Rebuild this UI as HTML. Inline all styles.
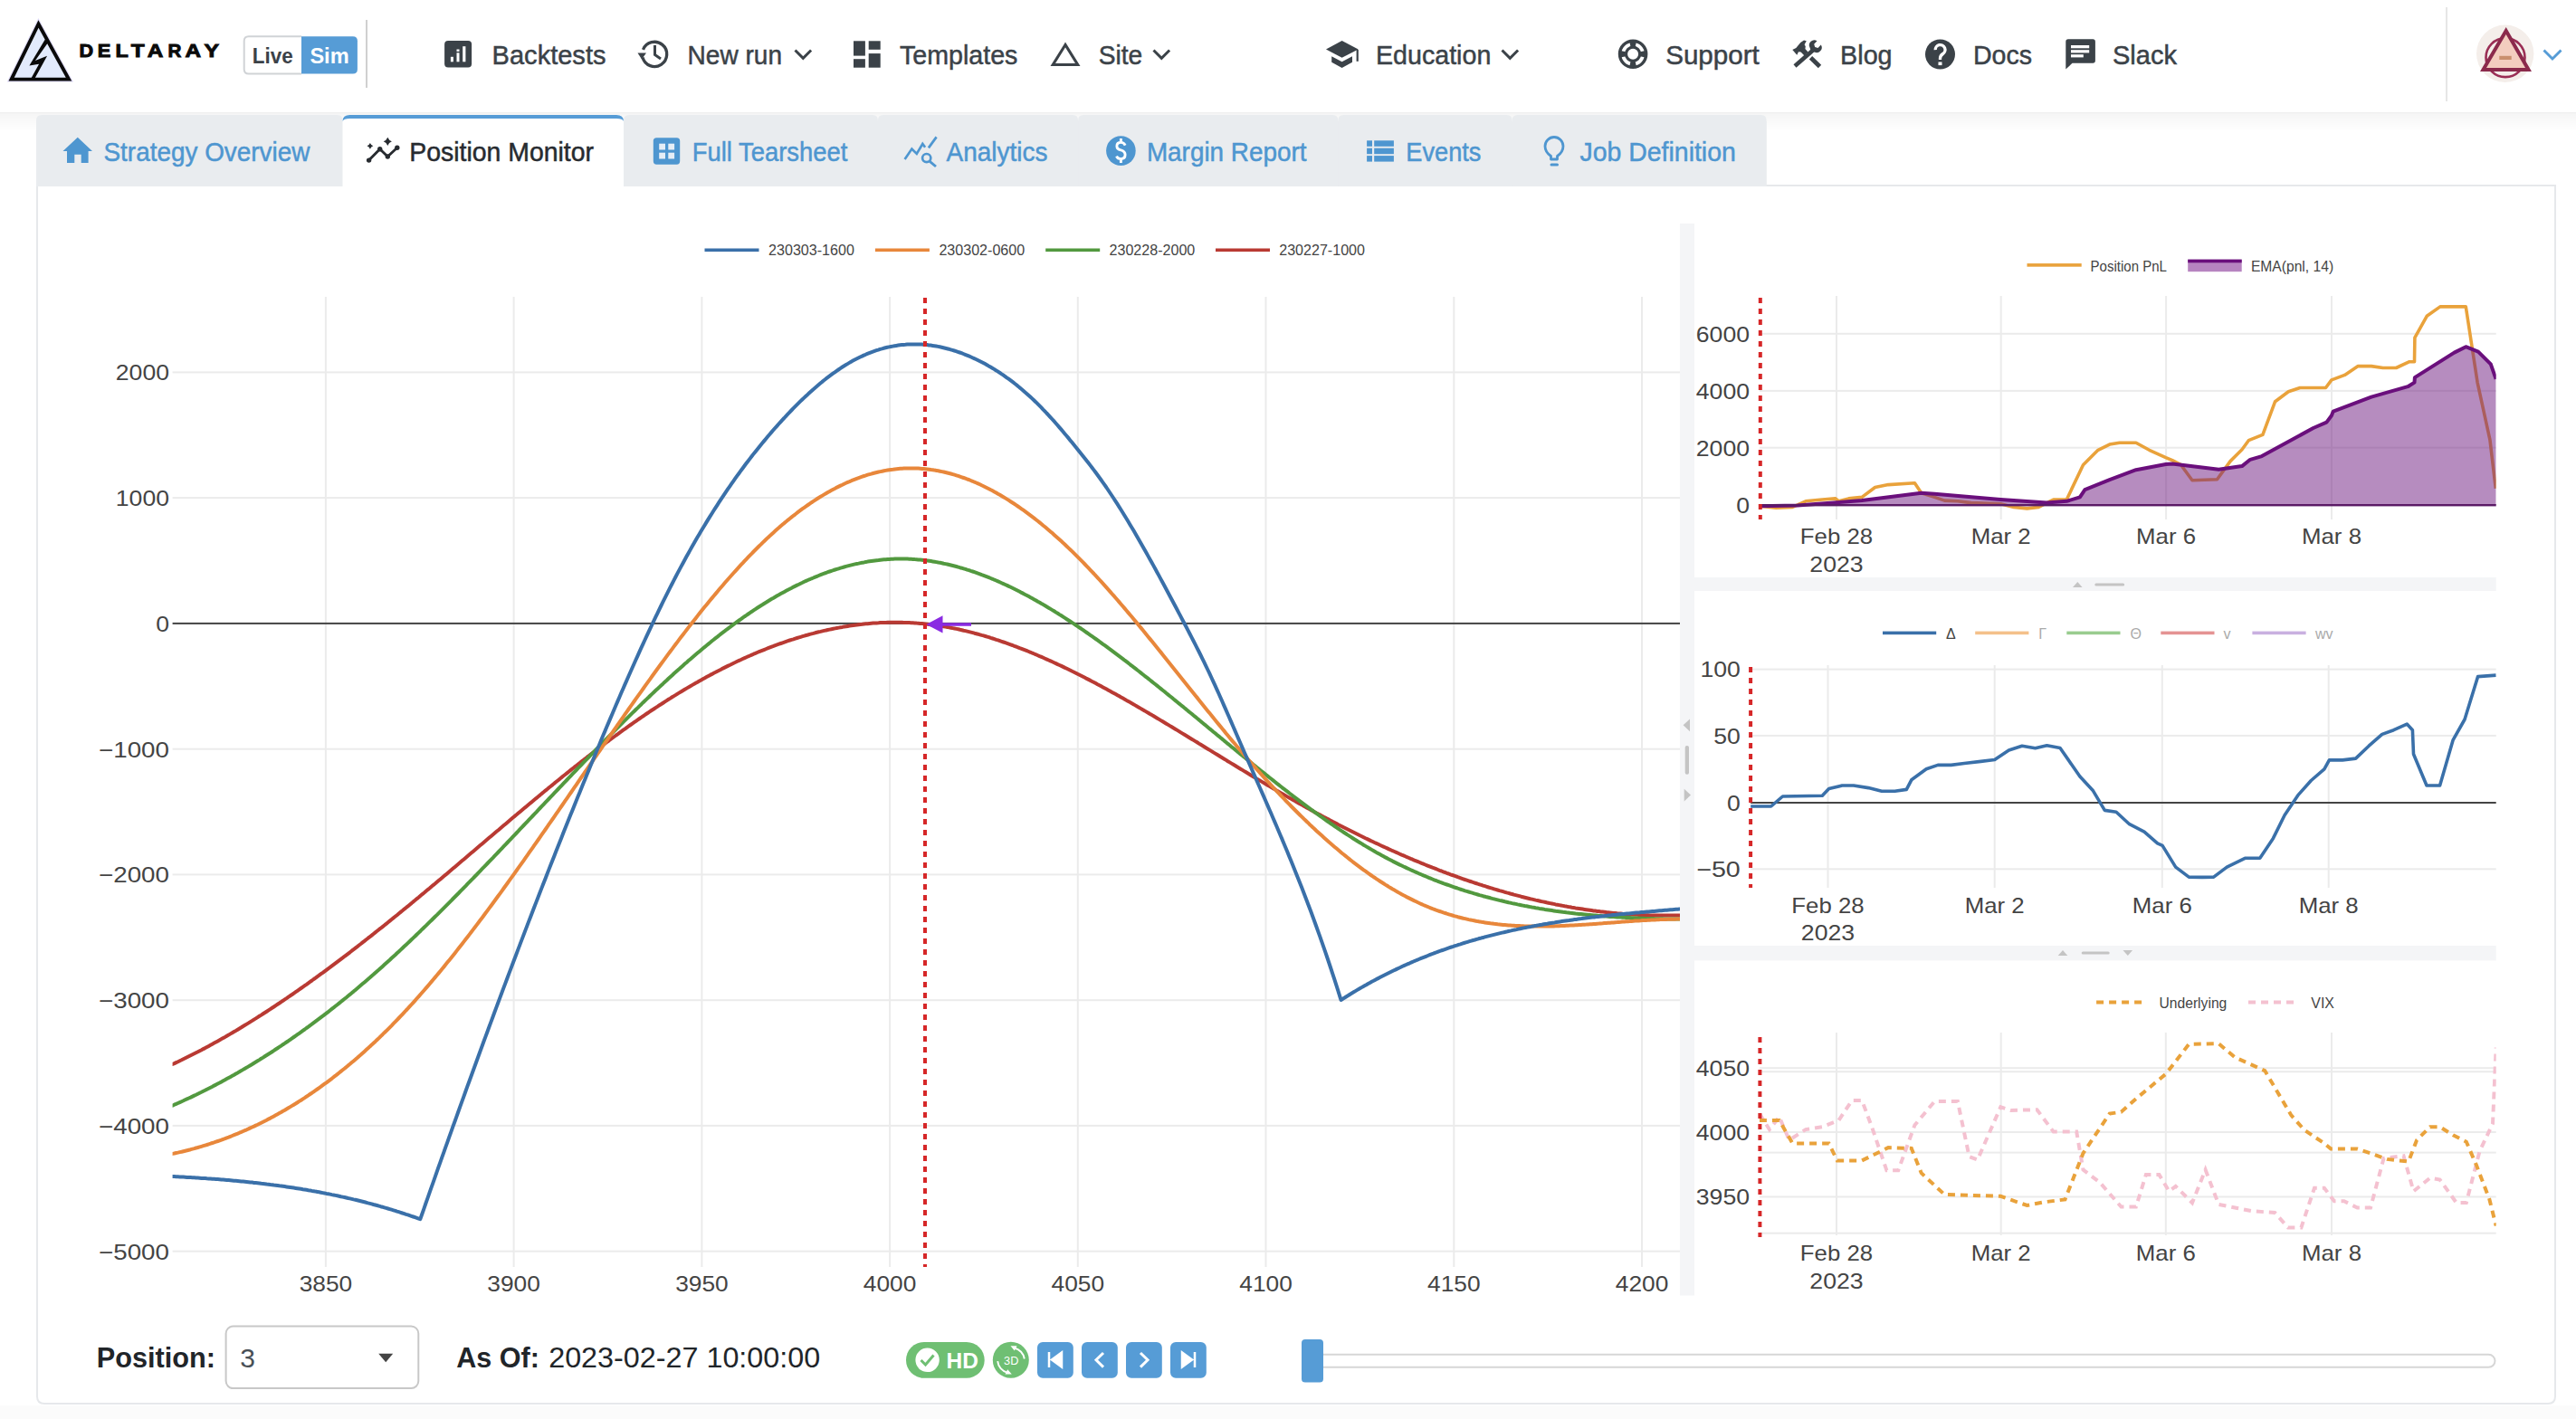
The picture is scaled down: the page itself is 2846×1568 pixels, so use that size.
<!DOCTYPE html><html><head><meta charset="utf-8"><style>html,body{margin:0;padding:0;background:#fff;width:2846px;height:1568px;overflow:hidden}svg{display:block;font-family:"Liberation Sans", sans-serif}</style></head><body>
<svg width="2846" height="1568" viewBox="0 0 2846 1568">
<defs><linearGradient id="nsh" x1="0" y1="0" x2="0" y2="1"><stop offset="0" stop-color="#000" stop-opacity="0.04"/><stop offset="1" stop-color="#000" stop-opacity="0"/></linearGradient><clipPath id="cpm"><rect x="190.6" y="328" width="1665.4" height="1072"/></clipPath><clipPath id="cpt"><rect x="1943.9" y="300" width="813.8" height="274"/></clipPath><clipPath id="cpmid"><rect x="1934.1" y="720" width="823.6" height="262"/></clipPath><clipPath id="cpb"><rect x="1943.9" y="1130" width="813.8" height="236"/></clipPath></defs>
<rect x="0" y="0" width="2846" height="1568" fill="#fff"/>
<rect x="0" y="1553" width="2846" height="15" fill="#fbfbfb"/>
<path d="M41 205 H2823 V1543 Q2823 1551 2815 1551 H49 Q41 1551 41 1543 Z" fill="#fff" stroke="#e6e8eb" stroke-width="2"/>
<rect x="0" y="0" width="2846" height="124" fill="#fff"/>
<rect x="0" y="125" width="2846" height="20" fill="url(#nsh)"/>
<rect x="0" y="124" width="2846" height="1.2" fill="#efefef"/>
<rect x="40" y="134" width="1911.6" height="71" fill="#e9ecef"/>
<path d="M40 206 V133 Q40 127 46 127 H372.5 Q378.5 127 378.5 133 V206 Z" fill="#e9ecef"/>
<path d="M378.5 206 V133 Q378.5 127 384.5 127 H683 Q689 127 689 133 V206 Z" fill="#fff"/>
<path d="M378.5 134 Q378.5 127 386.5 127 H681 Q689 127 689 134 Q688 131 681 131 H386.5 Q379.5 131 378.5 134 Z" fill="#569cd6"/>
<path d="M689 206 V133 Q689 127 695 127 H963.9 Q969.9 127 969.9 133 V206 Z" fill="#e9ecef"/>
<path d="M969.9 206 V133 Q969.9 127 975.9 127 H1185.1 Q1191.1 127 1191.1 133 V206 Z" fill="#e9ecef"/>
<path d="M1191.1 206 V133 Q1191.1 127 1197.1 127 H1472.4 Q1478.4 127 1478.4 133 V206 Z" fill="#e9ecef"/>
<path d="M1478.4 206 V133 Q1478.4 127 1484.4 127 H1664.6 Q1670.6 127 1670.6 133 V206 Z" fill="#e9ecef"/>
<path d="M1670.6 206 V133 Q1670.6 127 1676.6 127 H1945.6 Q1951.6 127 1951.6 133 V206 Z" fill="#e9ecef"/>
<text x="114.5" y="177.9" font-size="30" fill="#4e96d0" text-anchor="start" font-weight="normal" textLength="227.9" lengthAdjust="spacingAndGlyphs" stroke="#4e96d0" stroke-width="0.5">Strategy Overview</text>
<text x="452.2" y="177.9" font-size="30" fill="#272b30" text-anchor="start" font-weight="normal" textLength="203.8" lengthAdjust="spacingAndGlyphs" stroke="#272b30" stroke-width="0.5">Position Monitor</text>
<text x="764.7" y="177.9" font-size="30" fill="#4e96d0" text-anchor="start" font-weight="normal" textLength="171.6" lengthAdjust="spacingAndGlyphs" stroke="#4e96d0" stroke-width="0.5">Full Tearsheet</text>
<text x="1045.6" y="177.9" font-size="30" fill="#4e96d0" text-anchor="start" font-weight="normal" textLength="111.8" lengthAdjust="spacingAndGlyphs" stroke="#4e96d0" stroke-width="0.5">Analytics</text>
<text x="1266.9" y="177.9" font-size="30" fill="#4e96d0" text-anchor="start" font-weight="normal" textLength="176.6" lengthAdjust="spacingAndGlyphs" stroke="#4e96d0" stroke-width="0.5">Margin Report</text>
<text x="1553.3" y="177.9" font-size="30" fill="#4e96d0" text-anchor="start" font-weight="normal" textLength="83.1" lengthAdjust="spacingAndGlyphs" stroke="#4e96d0" stroke-width="0.5">Events</text>
<text x="1745.5" y="177.9" font-size="30" fill="#4e96d0" text-anchor="start" font-weight="normal" textLength="172.3" lengthAdjust="spacingAndGlyphs" stroke="#4e96d0" stroke-width="0.5">Job Definition</text>
<text x="543.6" y="70.8" font-size="30" fill="#3b4248" text-anchor="start" font-weight="normal" textLength="125.9" lengthAdjust="spacingAndGlyphs" stroke="#3b4248" stroke-width="0.5">Backtests</text>
<text x="759.6" y="70.8" font-size="30" fill="#3b4248" text-anchor="start" font-weight="normal" textLength="104.4" lengthAdjust="spacingAndGlyphs" stroke="#3b4248" stroke-width="0.5">New run</text>
<text x="994" y="70.8" font-size="30" fill="#3b4248" text-anchor="start" font-weight="normal" textLength="130.4" lengthAdjust="spacingAndGlyphs" stroke="#3b4248" stroke-width="0.5">Templates</text>
<text x="1213.7" y="70.8" font-size="30" fill="#3b4248" text-anchor="start" font-weight="normal" textLength="48.5" lengthAdjust="spacingAndGlyphs" stroke="#3b4248" stroke-width="0.5">Site</text>
<text x="1520" y="70.8" font-size="30" fill="#3b4248" text-anchor="start" font-weight="normal" textLength="127.3" lengthAdjust="spacingAndGlyphs" stroke="#3b4248" stroke-width="0.5">Education</text>
<text x="1840.2" y="70.8" font-size="30" fill="#3b4248" text-anchor="start" font-weight="normal" textLength="103.6" lengthAdjust="spacingAndGlyphs" stroke="#3b4248" stroke-width="0.5">Support</text>
<text x="2033.1" y="70.8" font-size="30" fill="#3b4248" text-anchor="start" font-weight="normal" textLength="57.5" lengthAdjust="spacingAndGlyphs" stroke="#3b4248" stroke-width="0.5">Blog</text>
<text x="2179.9" y="70.8" font-size="30" fill="#3b4248" text-anchor="start" font-weight="normal" textLength="65.1" lengthAdjust="spacingAndGlyphs" stroke="#3b4248" stroke-width="0.5">Docs</text>
<text x="2334" y="70.8" font-size="30" fill="#3b4248" text-anchor="start" font-weight="normal" textLength="71" lengthAdjust="spacingAndGlyphs" stroke="#3b4248" stroke-width="0.5">Slack</text>
<rect x="404" y="22" width="2" height="75" fill="#d0d0d0"/>
<rect x="2702" y="8" width="2" height="104" fill="#e6e6e6"/>
<rect x="190.6" y="410.4" width="1665.4" height="2" fill="#ebebeb"/>
<rect x="190.6" y="549.1" width="1665.4" height="2" fill="#ebebeb"/>
<rect x="190.6" y="826.7" width="1665.4" height="2" fill="#ebebeb"/>
<rect x="190.6" y="965.4" width="1665.4" height="2" fill="#ebebeb"/>
<rect x="190.6" y="1104.2" width="1665.4" height="2" fill="#ebebeb"/>
<rect x="190.6" y="1242.9" width="1665.4" height="2" fill="#ebebeb"/>
<rect x="190.6" y="1381.7" width="1665.4" height="2" fill="#ebebeb"/>
<rect x="358.9" y="328" width="2" height="1072" fill="#ebebeb"/>
<rect x="566.6" y="328" width="2" height="1072" fill="#ebebeb"/>
<rect x="774.4" y="328" width="2" height="1072" fill="#ebebeb"/>
<rect x="982.1" y="328" width="2" height="1072" fill="#ebebeb"/>
<rect x="1189.8" y="328" width="2" height="1072" fill="#ebebeb"/>
<rect x="1397.5" y="328" width="2" height="1072" fill="#ebebeb"/>
<rect x="1605.3" y="328" width="2" height="1072" fill="#ebebeb"/>
<rect x="1813" y="328" width="2" height="1072" fill="#ebebeb"/>
<text x="187" y="420.2" font-size="24" fill="#444" text-anchor="end" font-weight="normal" textLength="59.2" lengthAdjust="spacingAndGlyphs">2000</text>
<text x="187" y="558.9" font-size="24" fill="#444" text-anchor="end" font-weight="normal" textLength="59.2" lengthAdjust="spacingAndGlyphs">1000</text>
<text x="187" y="697.7" font-size="24" fill="#444" text-anchor="end" font-weight="normal" textLength="14.8" lengthAdjust="spacingAndGlyphs">0</text>
<text x="187" y="836.5" font-size="24" fill="#444" text-anchor="end" font-weight="normal" textLength="78" lengthAdjust="spacingAndGlyphs">−1000</text>
<text x="187" y="975.2" font-size="24" fill="#444" text-anchor="end" font-weight="normal" textLength="78" lengthAdjust="spacingAndGlyphs">−2000</text>
<text x="187" y="1114" font-size="24" fill="#444" text-anchor="end" font-weight="normal" textLength="78" lengthAdjust="spacingAndGlyphs">−3000</text>
<text x="187" y="1252.7" font-size="24" fill="#444" text-anchor="end" font-weight="normal" textLength="78" lengthAdjust="spacingAndGlyphs">−4000</text>
<text x="187" y="1391.5" font-size="24" fill="#444" text-anchor="end" font-weight="normal" textLength="78" lengthAdjust="spacingAndGlyphs">−5000</text>
<text x="359.9" y="1427" font-size="24" fill="#444" text-anchor="middle" font-weight="normal" textLength="58.5" lengthAdjust="spacingAndGlyphs">3850</text>
<text x="567.6" y="1427" font-size="24" fill="#444" text-anchor="middle" font-weight="normal" textLength="58.5" lengthAdjust="spacingAndGlyphs">3900</text>
<text x="775.4" y="1427" font-size="24" fill="#444" text-anchor="middle" font-weight="normal" textLength="58.5" lengthAdjust="spacingAndGlyphs">3950</text>
<text x="983.1" y="1427" font-size="24" fill="#444" text-anchor="middle" font-weight="normal" textLength="58.5" lengthAdjust="spacingAndGlyphs">4000</text>
<text x="1190.8" y="1427" font-size="24" fill="#444" text-anchor="middle" font-weight="normal" textLength="58.5" lengthAdjust="spacingAndGlyphs">4050</text>
<text x="1398.5" y="1427" font-size="24" fill="#444" text-anchor="middle" font-weight="normal" textLength="58.5" lengthAdjust="spacingAndGlyphs">4100</text>
<text x="1606.3" y="1427" font-size="24" fill="#444" text-anchor="middle" font-weight="normal" textLength="58.5" lengthAdjust="spacingAndGlyphs">4150</text>
<text x="1814" y="1427" font-size="24" fill="#444" text-anchor="middle" font-weight="normal" textLength="58.5" lengthAdjust="spacingAndGlyphs">4200</text>
<rect x="190.6" y="687.9" width="1665.4" height="2" fill="#444"/>
<g clip-path="url(#cpm)" fill="none" stroke-width="4" stroke-linejoin="round" stroke-linecap="round">
<path d="M190.6 1176 L192.6 1175.1 L194.6 1174.1 L196.6 1173.2 L198.6 1172.2 L200.6 1171.3 L202.6 1170.3 L204.6 1169.3 L206.6 1168.3 L208.6 1167.3 L210.6 1166.3 L212.6 1165.3 L214.6 1164.3 L216.6 1163.3 L218.6 1162.3 L220.6 1161.2 L222.6 1160.2 L224.6 1159.1 L226.6 1158.1 L228.6 1157 L230.6 1155.9 L232.6 1154.8 L234.6 1153.7 L236.6 1152.6 L238.6 1151.5 L240.6 1150.4 L242.6 1149.3 L244.6 1148.1 L246.6 1147 L248.6 1145.9 L250.6 1144.7 L252.6 1143.6 L254.6 1142.4 L256.6 1141.2 L258.6 1140 L260.6 1138.9 L262.6 1137.7 L264.6 1136.5 L266.6 1135.3 L268.6 1134 L270.6 1132.8 L272.6 1131.6 L274.6 1130.4 L276.6 1129.1 L278.6 1127.9 L280.6 1126.6 L282.6 1125.4 L284.6 1124.1 L286.6 1122.8 L288.6 1121.6 L290.6 1120.3 L292.6 1119 L294.6 1117.7 L296.6 1116.4 L298.6 1115.1 L300.6 1113.8 L302.6 1112.5 L304.6 1111.1 L306.6 1109.8 L308.6 1108.5 L310.6 1107.1 L312.6 1105.8 L314.6 1104.4 L316.6 1103.1 L318.6 1101.7 L320.6 1100.3 L322.6 1099 L324.6 1097.6 L326.6 1096.2 L328.6 1094.8 L330.6 1093.4 L332.6 1092 L334.6 1090.6 L336.6 1089.2 L338.6 1087.8 L340.6 1086.3 L342.6 1084.9 L344.6 1083.5 L346.6 1082 L348.6 1080.6 L350.6 1079.1 L352.6 1077.7 L354.6 1076.2 L356.6 1074.8 L358.6 1073.3 L360.6 1071.8 L362.6 1070.3 L364.6 1068.9 L366.6 1067.4 L368.6 1065.9 L370.6 1064.4 L372.6 1062.9 L374.6 1061.4 L376.6 1059.9 L378.6 1058.4 L380.6 1056.8 L382.6 1055.3 L384.6 1053.8 L386.6 1052.3 L388.6 1050.7 L390.6 1049.2 L392.6 1047.6 L394.6 1046.1 L396.6 1044.5 L398.6 1043 L400.6 1041.4 L402.6 1039.9 L404.6 1038.3 L406.6 1036.7 L408.6 1035.2 L410.6 1033.6 L412.6 1032 L414.6 1030.4 L416.6 1028.8 L418.6 1027.2 L420.6 1025.7 L422.6 1024.1 L424.6 1022.5 L426.6 1020.9 L428.6 1019.2 L430.6 1017.6 L432.6 1016 L434.6 1014.4 L436.6 1012.8 L438.6 1011.2 L440.6 1009.5 L442.6 1007.9 L444.6 1006.3 L446.6 1004.6 L448.6 1003 L450.6 1001.4 L452.6 999.7 L454.6 998.1 L456.6 996.4 L458.6 994.8 L460.6 993.1 L462.6 991.5 L464.6 989.8 L466.6 988.1 L468.6 986.5 L470.6 984.8 L472.6 983.1 L474.6 981.5 L476.6 979.8 L478.6 978.1 L480.6 976.5 L482.6 974.8 L484.6 973.1 L486.6 971.4 L488.6 969.7 L490.6 968 L492.6 966.4 L494.6 964.7 L496.6 963 L498.6 961.3 L500.6 959.6 L502.6 957.9 L504.6 956.2 L506.6 954.5 L508.6 952.8 L510.6 951.1 L512.6 949.4 L514.6 947.7 L516.6 946 L518.6 944.3 L520.6 942.6 L522.6 940.9 L524.6 939.2 L526.6 937.5 L528.6 935.8 L530.6 934.1 L532.6 932.4 L534.6 930.7 L536.6 929 L538.6 927.3 L540.6 925.6 L542.6 923.9 L544.6 922.2 L546.6 920.5 L548.6 918.8 L550.6 917.2 L552.6 915.5 L554.6 913.8 L556.6 912.1 L558.6 910.4 L560.6 908.7 L562.6 907 L564.6 905.3 L566.6 903.6 L568.6 901.9 L570.6 900.3 L572.6 898.6 L574.6 896.9 L576.6 895.2 L578.6 893.5 L580.6 891.9 L582.6 890.2 L584.6 888.5 L586.6 886.9 L588.6 885.2 L590.6 883.5 L592.6 881.9 L594.6 880.2 L596.6 878.6 L598.6 876.9 L600.6 875.3 L602.6 873.6 L604.6 872 L606.6 870.3 L608.6 868.7 L610.6 867.1 L612.6 865.4 L614.6 863.8 L616.6 862.2 L618.6 860.6 L620.6 858.9 L622.6 857.3 L624.6 855.7 L626.6 854.1 L628.6 852.5 L630.6 850.9 L632.6 849.3 L634.6 847.7 L636.6 846.2 L638.6 844.6 L640.6 843 L642.6 841.4 L644.6 839.9 L646.6 838.3 L648.6 836.7 L650.6 835.2 L652.6 833.6 L654.6 832.1 L656.6 830.6 L658.6 829 L660.6 827.5 L662.6 826 L664.6 824.5 L666.6 823 L668.6 821.4 L670.6 819.9 L672.6 818.5 L674.6 817 L676.6 815.5 L678.6 814 L680.6 812.5 L682.6 811.1 L684.6 809.6 L686.6 808.2 L688.6 806.7 L690.6 805.3 L692.6 803.8 L694.6 802.4 L696.6 801 L698.6 799.6 L700.6 798.2 L702.6 796.8 L704.6 795.4 L706.6 794 L708.6 792.6 L710.6 791.3 L712.6 789.9 L714.6 788.5 L716.6 787.2 L718.6 785.8 L720.6 784.5 L722.6 783.2 L724.6 781.9 L726.6 780.6 L728.6 779.2 L730.6 778 L732.6 776.7 L734.6 775.4 L736.6 774.1 L738.6 772.8 L740.6 771.6 L742.6 770.3 L744.6 769.1 L746.6 767.9 L748.6 766.6 L750.6 765.4 L752.6 764.2 L754.6 763 L756.6 761.8 L758.6 760.6 L760.6 759.4 L762.6 758.3 L764.6 757.1 L766.6 755.9 L768.6 754.8 L770.6 753.7 L772.6 752.5 L774.6 751.4 L776.6 750.3 L778.6 749.2 L780.6 748.1 L782.6 747 L784.6 745.9 L786.6 744.9 L788.6 743.8 L790.6 742.8 L792.6 741.7 L794.6 740.7 L796.6 739.7 L798.6 738.6 L800.6 737.6 L802.6 736.6 L804.6 735.6 L806.6 734.7 L808.6 733.7 L810.6 732.7 L812.6 731.8 L814.6 730.8 L816.6 729.9 L818.6 729 L820.6 728 L822.6 727.1 L824.6 726.2 L826.6 725.3 L828.6 724.5 L830.6 723.6 L832.6 722.7 L834.6 721.9 L836.6 721 L838.6 720.2 L840.6 719.4 L842.6 718.6 L844.6 717.8 L846.6 717 L848.6 716.2 L850.6 715.4 L852.6 714.6 L854.6 713.9 L856.6 713.1 L858.6 712.4 L860.6 711.7 L862.6 711 L864.6 710.3 L866.6 709.6 L868.6 708.9 L870.6 708.2 L872.6 707.5 L874.6 706.9 L876.6 706.3 L878.6 705.6 L880.6 705 L882.6 704.4 L884.6 703.8 L886.6 703.2 L888.6 702.6 L890.6 702 L892.6 701.5 L894.6 700.9 L896.6 700.4 L898.6 699.9 L900.6 699.3 L902.6 698.8 L904.6 698.3 L906.6 697.9 L908.6 697.4 L910.6 696.9 L912.6 696.5 L914.6 696 L916.6 695.6 L918.6 695.2 L920.6 694.8 L922.6 694.4 L924.6 694 L926.6 693.6 L928.6 693.2 L930.6 692.9 L932.6 692.5 L934.6 692.2 L936.6 691.9 L938.6 691.6 L940.6 691.3 L942.6 691 L944.6 690.7 L946.6 690.5 L948.6 690.2 L950.6 690 L952.6 689.8 L954.6 689.5 L956.6 689.3 L958.6 689.2 L960.6 689 L962.6 688.8 L964.6 688.6 L966.6 688.5 L968.6 688.4 L970.6 688.3 L972.6 688.1 L974.6 688.1 L976.6 688 L978.6 687.9 L980.6 687.8 L982.6 687.8 L984.6 687.8 L986.6 687.7 L988.6 687.7 L990.6 687.7 L992.6 687.7 L994.6 687.8 L996.6 687.8 L998.6 687.9 L1000.6 687.9 L1002.6 688 L1004.6 688.1 L1006.6 688.2 L1008.6 688.3 L1010.6 688.4 L1012.6 688.6 L1014.6 688.7 L1016.6 688.9 L1018.6 689.1 L1020.6 689.3 L1022.6 689.5 L1024.6 689.7 L1026.6 689.9 L1028.6 690.2 L1030.6 690.4 L1032.6 690.7 L1034.6 691 L1036.6 691.3 L1038.6 691.6 L1040.6 691.9 L1042.6 692.2 L1044.6 692.6 L1046.6 692.9 L1048.6 693.3 L1050.6 693.7 L1052.6 694.1 L1054.6 694.5 L1056.6 694.9 L1058.6 695.3 L1060.6 695.8 L1062.6 696.2 L1064.6 696.7 L1066.6 697.1 L1068.6 697.6 L1070.6 698.1 L1072.6 698.6 L1074.6 699.1 L1076.6 699.7 L1078.6 700.2 L1080.6 700.7 L1082.6 701.3 L1084.6 701.9 L1086.6 702.4 L1088.6 703 L1090.6 703.6 L1092.6 704.2 L1094.6 704.9 L1096.6 705.5 L1098.6 706.1 L1100.6 706.8 L1102.6 707.4 L1104.6 708.1 L1106.6 708.8 L1108.6 709.5 L1110.6 710.2 L1112.6 710.9 L1114.6 711.6 L1116.6 712.3 L1118.6 713 L1120.6 713.8 L1122.6 714.5 L1124.6 715.3 L1126.6 716.1 L1128.6 716.8 L1130.6 717.6 L1132.6 718.4 L1134.6 719.2 L1136.6 720 L1138.6 720.8 L1140.6 721.7 L1142.6 722.5 L1144.6 723.3 L1146.6 724.2 L1148.6 725.1 L1150.6 725.9 L1152.6 726.8 L1154.6 727.7 L1156.6 728.6 L1158.6 729.5 L1160.6 730.4 L1162.6 731.3 L1164.6 732.2 L1166.6 733.1 L1168.6 734.1 L1170.6 735 L1172.6 735.9 L1174.6 736.9 L1176.6 737.9 L1178.6 738.8 L1180.6 739.8 L1182.6 740.8 L1184.6 741.8 L1186.6 742.7 L1188.6 743.7 L1190.6 744.8 L1192.6 745.8 L1194.6 746.8 L1196.6 747.8 L1198.6 748.8 L1200.6 749.9 L1202.6 750.9 L1204.6 751.9 L1206.6 753 L1208.6 754 L1210.6 755.1 L1212.6 756.2 L1214.6 757.2 L1216.6 758.3 L1218.6 759.4 L1220.6 760.5 L1222.6 761.6 L1224.6 762.7 L1226.6 763.8 L1228.6 764.9 L1230.6 766 L1232.6 767.1 L1234.6 768.2 L1236.6 769.3 L1238.6 770.5 L1240.6 771.6 L1242.6 772.7 L1244.6 773.9 L1246.6 775 L1248.6 776.1 L1250.6 777.3 L1252.6 778.4 L1254.6 779.6 L1256.6 780.8 L1258.6 781.9 L1260.6 783.1 L1262.6 784.3 L1264.6 785.4 L1266.6 786.6 L1268.6 787.8 L1270.6 789 L1272.6 790.1 L1274.6 791.3 L1276.6 792.5 L1278.6 793.7 L1280.6 794.9 L1282.6 796.1 L1284.6 797.3 L1286.6 798.5 L1288.6 799.7 L1290.6 800.9 L1292.6 802.1 L1294.6 803.3 L1296.6 804.5 L1298.6 805.7 L1300.6 806.9 L1302.6 808.1 L1304.6 809.4 L1306.6 810.6 L1308.6 811.8 L1310.6 813 L1312.6 814.2 L1314.6 815.5 L1316.6 816.7 L1318.6 817.9 L1320.6 819.1 L1322.6 820.3 L1324.6 821.6 L1326.6 822.8 L1328.6 824 L1330.6 825.2 L1332.6 826.5 L1334.6 827.7 L1336.6 828.9 L1338.6 830.1 L1340.6 831.4 L1342.6 832.6 L1344.6 833.8 L1346.6 835 L1348.6 836.3 L1350.6 837.5 L1352.6 838.7 L1354.6 839.9 L1356.6 841.2 L1358.6 842.4 L1360.6 843.6 L1362.6 844.8 L1364.6 846 L1366.6 847.3 L1368.6 848.5 L1370.6 849.7 L1372.6 850.9 L1374.6 852.1 L1376.6 853.3 L1378.6 854.5 L1380.6 855.7 L1382.6 857 L1384.6 858.2 L1386.6 859.4 L1388.6 860.6 L1390.6 861.8 L1392.6 862.9 L1394.6 864.1 L1396.6 865.3 L1398.6 866.5 L1400.6 867.7 L1402.6 868.9 L1404.6 870.1 L1406.6 871.2 L1408.6 872.4 L1410.6 873.6 L1412.6 874.8 L1414.6 875.9 L1416.6 877.1 L1418.6 878.2 L1420.6 879.4 L1422.6 880.6 L1424.6 881.7 L1426.6 882.8 L1428.6 884 L1430.6 885.1 L1432.6 886.3 L1434.6 887.4 L1436.6 888.5 L1438.6 889.6 L1440.6 890.7 L1442.6 891.9 L1444.6 893 L1446.6 894.1 L1448.6 895.2 L1450.6 896.3 L1452.6 897.4 L1454.6 898.5 L1456.6 899.5 L1458.6 900.6 L1460.6 901.7 L1462.6 902.8 L1464.6 903.8 L1466.6 904.9 L1468.6 905.9 L1470.6 907 L1472.6 908.1 L1474.6 909.1 L1476.6 910.1 L1478.6 911.2 L1480.6 912.2 L1482.6 913.2 L1484.6 914.3 L1486.6 915.3 L1488.6 916.3 L1490.6 917.3 L1492.6 918.3 L1494.6 919.3 L1496.6 920.3 L1498.6 921.3 L1500.6 922.3 L1502.6 923.3 L1504.6 924.2 L1506.6 925.2 L1508.6 926.2 L1510.6 927.1 L1512.6 928.1 L1514.6 929.1 L1516.6 930 L1518.6 931 L1520.6 931.9 L1522.6 932.8 L1524.6 933.8 L1526.6 934.7 L1528.6 935.6 L1530.6 936.5 L1532.6 937.4 L1534.6 938.4 L1536.6 939.3 L1538.6 940.2 L1540.6 941 L1542.6 941.9 L1544.6 942.8 L1546.6 943.7 L1548.6 944.6 L1550.6 945.4 L1552.6 946.3 L1554.6 947.2 L1556.6 948 L1558.6 948.9 L1560.6 949.7 L1562.6 950.6 L1564.6 951.4 L1566.6 952.2 L1568.6 953 L1570.6 953.9 L1572.6 954.7 L1574.6 955.5 L1576.6 956.3 L1578.6 957.1 L1580.6 957.9 L1582.6 958.7 L1584.6 959.4 L1586.6 960.2 L1588.6 961 L1590.6 961.8 L1592.6 962.5 L1594.6 963.3 L1596.6 964 L1598.6 964.8 L1600.6 965.5 L1602.6 966.3 L1604.6 967 L1606.6 967.7 L1608.6 968.4 L1610.6 969.2 L1612.6 969.9 L1614.6 970.6 L1616.6 971.3 L1618.6 972 L1620.6 972.6 L1622.6 973.3 L1624.6 974 L1626.6 974.7 L1628.6 975.3 L1630.6 976 L1632.6 976.7 L1634.6 977.3 L1636.6 977.9 L1638.6 978.6 L1640.6 979.2 L1642.6 979.8 L1644.6 980.5 L1646.6 981.1 L1648.6 981.7 L1650.6 982.3 L1652.6 982.9 L1654.6 983.5 L1656.6 984.1 L1658.6 984.6 L1660.6 985.2 L1662.6 985.8 L1664.6 986.4 L1666.6 986.9 L1668.6 987.5 L1670.6 988 L1672.6 988.6 L1674.6 989.1 L1676.6 989.6 L1678.6 990.1 L1680.6 990.7 L1682.6 991.2 L1684.6 991.7 L1686.6 992.2 L1688.6 992.7 L1690.6 993.2 L1692.6 993.6 L1694.6 994.1 L1696.6 994.6 L1698.6 995 L1700.6 995.5 L1702.6 996 L1704.6 996.4 L1706.6 996.8 L1708.6 997.3 L1710.6 997.7 L1712.6 998.1 L1714.6 998.5 L1716.6 998.9 L1718.6 999.4 L1720.6 999.7 L1722.6 1000.1 L1724.6 1000.5 L1726.6 1000.9 L1728.6 1001.3 L1730.6 1001.6 L1732.6 1002 L1734.6 1002.3 L1736.6 1002.7 L1738.6 1003 L1740.6 1003.4 L1742.6 1003.7 L1744.6 1004 L1746.6 1004.3 L1748.6 1004.6 L1750.6 1004.9 L1752.6 1005.2 L1754.6 1005.5 L1756.6 1005.8 L1758.6 1006.1 L1760.6 1006.4 L1762.6 1006.6 L1764.6 1006.9 L1766.6 1007.1 L1768.6 1007.4 L1770.6 1007.6 L1772.6 1007.8 L1774.6 1008.1 L1776.6 1008.3 L1778.6 1008.5 L1780.6 1008.7 L1782.6 1008.9 L1784.6 1009.1 L1786.6 1009.3 L1788.6 1009.4 L1790.6 1009.6 L1792.6 1009.8 L1794.6 1009.9 L1796.6 1010.1 L1798.6 1010.2 L1800.6 1010.4 L1802.6 1010.5 L1804.6 1010.6 L1806.6 1010.7 L1808.6 1010.8 L1810.6 1010.9 L1812.6 1011 L1814.6 1011.1 L1816.6 1011.2 L1818.6 1011.3 L1820.6 1011.3 L1822.6 1011.4 L1824.6 1011.5 L1826.6 1011.5 L1828.6 1011.5 L1830.6 1011.6 L1832.6 1011.6 L1834.6 1011.6 L1836.6 1011.6 L1838.6 1011.6 L1840.6 1011.6 L1842.6 1011.6 L1844.6 1011.6 L1846.6 1011.6 L1848.6 1011.6 L1850.6 1011.5 L1852.6 1011.5 L1854.6 1011.4 L1855.7 1011.4" stroke="#b93a33"/>
<path d="M190.6 1221.6 L192.6 1220.7 L194.6 1219.9 L196.6 1219 L198.6 1218.1 L200.6 1217.2 L202.6 1216.3 L204.6 1215.3 L206.6 1214.4 L208.6 1213.5 L210.6 1212.6 L212.6 1211.6 L214.6 1210.6 L216.6 1209.7 L218.6 1208.7 L220.6 1207.7 L222.6 1206.8 L224.6 1205.8 L226.6 1204.8 L228.6 1203.7 L230.6 1202.7 L232.6 1201.7 L234.6 1200.7 L236.6 1199.6 L238.6 1198.6 L240.6 1197.5 L242.6 1196.5 L244.6 1195.4 L246.6 1194.3 L248.6 1193.2 L250.6 1192.1 L252.6 1191 L254.6 1189.9 L256.6 1188.8 L258.6 1187.7 L260.6 1186.5 L262.6 1185.4 L264.6 1184.2 L266.6 1183.1 L268.6 1181.9 L270.6 1180.7 L272.6 1179.6 L274.6 1178.4 L276.6 1177.2 L278.6 1176 L280.6 1174.7 L282.6 1173.5 L284.6 1172.3 L286.6 1171.1 L288.6 1169.8 L290.6 1168.6 L292.6 1167.3 L294.6 1166 L296.6 1164.7 L298.6 1163.5 L300.6 1162.2 L302.6 1160.9 L304.6 1159.5 L306.6 1158.2 L308.6 1156.9 L310.6 1155.6 L312.6 1154.2 L314.6 1152.9 L316.6 1151.5 L318.6 1150.2 L320.6 1148.8 L322.6 1147.4 L324.6 1146 L326.6 1144.6 L328.6 1143.2 L330.6 1141.8 L332.6 1140.4 L334.6 1138.9 L336.6 1137.5 L338.6 1136 L340.6 1134.6 L342.6 1133.1 L344.6 1131.7 L346.6 1130.2 L348.6 1128.7 L350.6 1127.2 L352.6 1125.7 L354.6 1124.2 L356.6 1122.7 L358.6 1121.1 L360.6 1119.6 L362.6 1118.1 L364.6 1116.5 L366.6 1114.9 L368.6 1113.4 L370.6 1111.8 L372.6 1110.2 L374.6 1108.6 L376.6 1107 L378.6 1105.4 L380.6 1103.8 L382.6 1102.2 L384.6 1100.5 L386.6 1098.9 L388.6 1097.2 L390.6 1095.6 L392.6 1093.9 L394.6 1092.2 L396.6 1090.5 L398.6 1088.8 L400.6 1087.1 L402.6 1085.4 L404.6 1083.7 L406.6 1082 L408.6 1080.3 L410.6 1078.5 L412.6 1076.8 L414.6 1075 L416.6 1073.2 L418.6 1071.5 L420.6 1069.7 L422.6 1067.9 L424.6 1066.1 L426.6 1064.3 L428.6 1062.5 L430.6 1060.7 L432.6 1058.8 L434.6 1057 L436.6 1055.2 L438.6 1053.3 L440.6 1051.5 L442.6 1049.6 L444.6 1047.7 L446.6 1045.8 L448.6 1044 L450.6 1042.1 L452.6 1040.2 L454.6 1038.3 L456.6 1036.4 L458.6 1034.5 L460.6 1032.5 L462.6 1030.6 L464.6 1028.7 L466.6 1026.7 L468.6 1024.8 L470.6 1022.9 L472.6 1020.9 L474.6 1018.9 L476.6 1017 L478.6 1015 L480.6 1013 L482.6 1011.1 L484.6 1009.1 L486.6 1007.1 L488.6 1005.1 L490.6 1003.1 L492.6 1001.1 L494.6 999.1 L496.6 997.1 L498.6 995.1 L500.6 993 L502.6 991 L504.6 989 L506.6 987 L508.6 984.9 L510.6 982.9 L512.6 980.8 L514.6 978.8 L516.6 976.7 L518.6 974.7 L520.6 972.6 L522.6 970.6 L524.6 968.5 L526.6 966.5 L528.6 964.4 L530.6 962.3 L532.6 960.2 L534.6 958.2 L536.6 956.1 L538.6 954 L540.6 951.9 L542.6 949.8 L544.6 947.8 L546.6 945.7 L548.6 943.6 L550.6 941.5 L552.6 939.4 L554.6 937.3 L556.6 935.2 L558.6 933.1 L560.6 931 L562.6 928.9 L564.6 926.8 L566.6 924.7 L568.6 922.6 L570.6 920.5 L572.6 918.4 L574.6 916.2 L576.6 914.1 L578.6 912 L580.6 909.9 L582.6 907.8 L584.6 905.7 L586.6 903.6 L588.6 901.5 L590.6 899.4 L592.6 897.3 L594.6 895.1 L596.6 893 L598.6 890.9 L600.6 888.8 L602.6 886.7 L604.6 884.6 L606.6 882.5 L608.6 880.4 L610.6 878.3 L612.6 876.2 L614.6 874.1 L616.6 872 L618.6 869.9 L620.6 867.8 L622.6 865.7 L624.6 863.6 L626.6 861.5 L628.6 859.4 L630.6 857.3 L632.6 855.2 L634.6 853.1 L636.6 851 L638.6 848.9 L640.6 846.9 L642.6 844.8 L644.6 842.7 L646.6 840.6 L648.6 838.6 L650.6 836.5 L652.6 834.4 L654.6 832.4 L656.6 830.3 L658.6 828.2 L660.6 826.2 L662.6 824.1 L664.6 822.1 L666.6 820.1 L668.6 818 L670.6 816 L672.6 813.9 L674.6 811.9 L676.6 809.9 L678.6 807.9 L680.6 805.9 L682.6 803.9 L684.6 801.8 L686.6 799.8 L688.6 797.8 L690.6 795.9 L692.6 793.9 L694.6 791.9 L696.6 789.9 L698.6 787.9 L700.6 786 L702.6 784 L704.6 782.1 L706.6 780.1 L708.6 778.2 L710.6 776.2 L712.6 774.3 L714.6 772.4 L716.6 770.5 L718.6 768.5 L720.6 766.6 L722.6 764.7 L724.6 762.8 L726.6 761 L728.6 759.1 L730.6 757.2 L732.6 755.4 L734.6 753.5 L736.6 751.7 L738.6 749.8 L740.6 748 L742.6 746.2 L744.6 744.3 L746.6 742.5 L748.6 740.7 L750.6 739 L752.6 737.2 L754.6 735.4 L756.6 733.6 L758.6 731.9 L760.6 730.1 L762.6 728.4 L764.6 726.7 L766.6 725 L768.6 723.3 L770.6 721.6 L772.6 719.9 L774.6 718.2 L776.6 716.5 L778.6 714.9 L780.6 713.2 L782.6 711.6 L784.6 710 L786.6 708.3 L788.6 706.7 L790.6 705.1 L792.6 703.6 L794.6 702 L796.6 700.4 L798.6 698.9 L800.6 697.4 L802.6 695.8 L804.6 694.3 L806.6 692.8 L808.6 691.3 L810.6 689.8 L812.6 688.4 L814.6 686.9 L816.6 685.5 L818.6 684.1 L820.6 682.6 L822.6 681.2 L824.6 679.9 L826.6 678.5 L828.6 677.1 L830.6 675.8 L832.6 674.4 L834.6 673.1 L836.6 671.8 L838.6 670.5 L840.6 669.2 L842.6 668 L844.6 666.7 L846.6 665.5 L848.6 664.2 L850.6 663 L852.6 661.8 L854.6 660.7 L856.6 659.5 L858.6 658.3 L860.6 657.2 L862.6 656.1 L864.6 655 L866.6 653.9 L868.6 652.8 L870.6 651.7 L872.6 650.7 L874.6 649.7 L876.6 648.6 L878.6 647.6 L880.6 646.6 L882.6 645.7 L884.6 644.7 L886.6 643.8 L888.6 642.8 L890.6 641.9 L892.6 641 L894.6 640.2 L896.6 639.3 L898.6 638.5 L900.6 637.6 L902.6 636.8 L904.6 636 L906.6 635.2 L908.6 634.4 L910.6 633.7 L912.6 633 L914.6 632.2 L916.6 631.5 L918.6 630.8 L920.6 630.2 L922.6 629.5 L924.6 628.9 L926.6 628.3 L928.6 627.7 L930.6 627.1 L932.6 626.5 L934.6 625.9 L936.6 625.4 L938.6 624.9 L940.6 624.4 L942.6 623.9 L944.6 623.4 L946.6 623 L948.6 622.6 L950.6 622.1 L952.6 621.7 L954.6 621.4 L956.6 621 L958.6 620.6 L960.6 620.3 L962.6 620 L964.6 619.7 L966.6 619.4 L968.6 619.2 L970.6 619 L972.6 618.7 L974.6 618.5 L976.6 618.3 L978.6 618.2 L980.6 618 L982.6 617.9 L984.6 617.8 L986.6 617.7 L988.6 617.6 L990.6 617.6 L992.6 617.5 L994.6 617.5 L996.6 617.5 L998.6 617.5 L1000.6 617.6 L1002.6 617.6 L1004.6 617.7 L1006.6 617.8 L1008.6 617.9 L1010.6 618.1 L1012.6 618.2 L1014.6 618.4 L1016.6 618.6 L1018.6 618.8 L1020.6 619 L1022.6 619.3 L1024.6 619.5 L1026.6 619.8 L1028.6 620.1 L1030.6 620.4 L1032.6 620.7 L1034.6 621.1 L1036.6 621.5 L1038.6 621.8 L1040.6 622.2 L1042.6 622.7 L1044.6 623.1 L1046.6 623.5 L1048.6 624 L1050.6 624.5 L1052.6 625 L1054.6 625.5 L1056.6 626 L1058.6 626.6 L1060.6 627.2 L1062.6 627.7 L1064.6 628.3 L1066.6 628.9 L1068.6 629.6 L1070.6 630.2 L1072.6 630.9 L1074.6 631.5 L1076.6 632.2 L1078.6 632.9 L1080.6 633.6 L1082.6 634.3 L1084.6 635.1 L1086.6 635.8 L1088.6 636.6 L1090.6 637.4 L1092.6 638.2 L1094.6 639 L1096.6 639.8 L1098.6 640.7 L1100.6 641.5 L1102.6 642.4 L1104.6 643.3 L1106.6 644.2 L1108.6 645.1 L1110.6 646 L1112.6 646.9 L1114.6 647.9 L1116.6 648.8 L1118.6 649.8 L1120.6 650.8 L1122.6 651.8 L1124.6 652.8 L1126.6 653.8 L1128.6 654.9 L1130.6 655.9 L1132.6 657 L1134.6 658 L1136.6 659.1 L1138.6 660.2 L1140.6 661.3 L1142.6 662.4 L1144.6 663.5 L1146.6 664.7 L1148.6 665.8 L1150.6 667 L1152.6 668.1 L1154.6 669.3 L1156.6 670.5 L1158.6 671.7 L1160.6 672.9 L1162.6 674.1 L1164.6 675.3 L1166.6 676.6 L1168.6 677.8 L1170.6 679.1 L1172.6 680.3 L1174.6 681.6 L1176.6 682.9 L1178.6 684.2 L1180.6 685.5 L1182.6 686.8 L1184.6 688.1 L1186.6 689.4 L1188.6 690.8 L1190.6 692.1 L1192.6 693.5 L1194.6 694.8 L1196.6 696.2 L1198.6 697.6 L1200.6 699 L1202.6 700.4 L1204.6 701.8 L1206.6 703.2 L1208.6 704.6 L1210.6 706 L1212.6 707.4 L1214.6 708.9 L1216.6 710.3 L1218.6 711.8 L1220.6 713.2 L1222.6 714.7 L1224.6 716.2 L1226.6 717.6 L1228.6 719.1 L1230.6 720.6 L1232.6 722.1 L1234.6 723.6 L1236.6 725.1 L1238.6 726.6 L1240.6 728.1 L1242.6 729.7 L1244.6 731.2 L1246.6 732.7 L1248.6 734.3 L1250.6 735.8 L1252.6 737.4 L1254.6 738.9 L1256.6 740.5 L1258.6 742 L1260.6 743.6 L1262.6 745.2 L1264.6 746.8 L1266.6 748.3 L1268.6 749.9 L1270.6 751.5 L1272.6 753.1 L1274.6 754.7 L1276.6 756.3 L1278.6 757.9 L1280.6 759.5 L1282.6 761.1 L1284.6 762.7 L1286.6 764.3 L1288.6 766 L1290.6 767.6 L1292.6 769.2 L1294.6 770.8 L1296.6 772.5 L1298.6 774.1 L1300.6 775.7 L1302.6 777.4 L1304.6 779 L1306.6 780.6 L1308.6 782.3 L1310.6 783.9 L1312.6 785.6 L1314.6 787.2 L1316.6 788.8 L1318.6 790.5 L1320.6 792.1 L1322.6 793.8 L1324.6 795.4 L1326.6 797.1 L1328.6 798.7 L1330.6 800.4 L1332.6 802 L1334.6 803.7 L1336.6 805.4 L1338.6 807 L1340.6 808.7 L1342.6 810.3 L1344.6 812 L1346.6 813.6 L1348.6 815.3 L1350.6 816.9 L1352.6 818.6 L1354.6 820.2 L1356.6 821.9 L1358.6 823.5 L1360.6 825.2 L1362.6 826.8 L1364.6 828.4 L1366.6 830.1 L1368.6 831.7 L1370.6 833.4 L1372.6 835 L1374.6 836.6 L1376.6 838.3 L1378.6 839.9 L1380.6 841.5 L1382.6 843.1 L1384.6 844.8 L1386.6 846.4 L1388.6 848 L1390.6 849.6 L1392.6 851.2 L1394.6 852.8 L1396.6 854.4 L1398.6 856 L1400.6 857.6 L1402.6 859.2 L1404.6 860.8 L1406.6 862.4 L1408.6 864 L1410.6 865.6 L1412.6 867.1 L1414.6 868.7 L1416.6 870.3 L1418.6 871.8 L1420.6 873.4 L1422.6 874.9 L1424.6 876.5 L1426.6 878 L1428.6 879.6 L1430.6 881.1 L1432.6 882.6 L1434.6 884.1 L1436.6 885.6 L1438.6 887.1 L1440.6 888.6 L1442.6 890.1 L1444.6 891.6 L1446.6 893.1 L1448.6 894.6 L1450.6 896 L1452.6 897.5 L1454.6 898.9 L1456.6 900.4 L1458.6 901.8 L1460.6 903.2 L1462.6 904.7 L1464.6 906.1 L1466.6 907.5 L1468.6 908.9 L1470.6 910.3 L1472.6 911.6 L1474.6 913 L1476.6 914.4 L1478.6 915.7 L1480.6 917.1 L1482.6 918.4 L1484.6 919.7 L1486.6 921 L1488.6 922.4 L1490.6 923.6 L1492.6 924.9 L1494.6 926.2 L1496.6 927.5 L1498.6 928.7 L1500.6 930 L1502.6 931.2 L1504.6 932.4 L1506.6 933.7 L1508.6 934.9 L1510.6 936.1 L1512.6 937.2 L1514.6 938.4 L1516.6 939.6 L1518.6 940.7 L1520.6 941.9 L1522.6 943 L1524.6 944.1 L1526.6 945.2 L1528.6 946.3 L1530.6 947.4 L1532.6 948.4 L1534.6 949.5 L1536.6 950.5 L1538.6 951.6 L1540.6 952.6 L1542.6 953.6 L1544.6 954.6 L1546.6 955.6 L1548.6 956.5 L1550.6 957.5 L1552.6 958.4 L1554.6 959.4 L1556.6 960.3 L1558.6 961.2 L1560.6 962.1 L1562.6 963 L1564.6 963.9 L1566.6 964.8 L1568.6 965.7 L1570.6 966.5 L1572.6 967.4 L1574.6 968.2 L1576.6 969 L1578.6 969.9 L1580.6 970.7 L1582.6 971.5 L1584.6 972.3 L1586.6 973 L1588.6 973.8 L1590.6 974.6 L1592.6 975.3 L1594.6 976.1 L1596.6 976.8 L1598.6 977.5 L1600.6 978.2 L1602.6 978.9 L1604.6 979.6 L1606.6 980.3 L1608.6 981 L1610.6 981.7 L1612.6 982.3 L1614.6 983 L1616.6 983.6 L1618.6 984.3 L1620.6 984.9 L1622.6 985.5 L1624.6 986.1 L1626.6 986.7 L1628.6 987.3 L1630.6 987.9 L1632.6 988.5 L1634.6 989.1 L1636.6 989.6 L1638.6 990.2 L1640.6 990.7 L1642.6 991.3 L1644.6 991.8 L1646.6 992.3 L1648.6 992.9 L1650.6 993.4 L1652.6 993.9 L1654.6 994.4 L1656.6 994.9 L1658.6 995.3 L1660.6 995.8 L1662.6 996.3 L1664.6 996.7 L1666.6 997.2 L1668.6 997.6 L1670.6 998.1 L1672.6 998.5 L1674.6 998.9 L1676.6 999.4 L1678.6 999.8 L1680.6 1000.2 L1682.6 1000.6 L1684.6 1001 L1686.6 1001.3 L1688.6 1001.7 L1690.6 1002.1 L1692.6 1002.5 L1694.6 1002.8 L1696.6 1003.2 L1698.6 1003.5 L1700.6 1003.9 L1702.6 1004.2 L1704.6 1004.5 L1706.6 1004.9 L1708.6 1005.2 L1710.6 1005.5 L1712.6 1005.8 L1714.6 1006.1 L1716.6 1006.4 L1718.6 1006.7 L1720.6 1006.9 L1722.6 1007.2 L1724.6 1007.5 L1726.6 1007.8 L1728.6 1008 L1730.6 1008.3 L1732.6 1008.5 L1734.6 1008.8 L1736.6 1009 L1738.6 1009.2 L1740.6 1009.5 L1742.6 1009.7 L1744.6 1009.9 L1746.6 1010.1 L1748.6 1010.3 L1750.6 1010.5 L1752.6 1010.7 L1754.6 1010.9 L1756.6 1011.1 L1758.6 1011.3 L1760.6 1011.5 L1762.6 1011.6 L1764.6 1011.8 L1766.6 1012 L1768.6 1012.1 L1770.6 1012.3 L1772.6 1012.4 L1774.6 1012.6 L1776.6 1012.7 L1778.6 1012.9 L1780.6 1013 L1782.6 1013.1 L1784.6 1013.3 L1786.6 1013.4 L1788.6 1013.5 L1790.6 1013.6 L1792.6 1013.7 L1794.6 1013.8 L1796.6 1013.9 L1798.6 1014 L1800.6 1014.1 L1802.6 1014.2 L1804.6 1014.3 L1806.6 1014.4 L1808.6 1014.5 L1810.6 1014.6 L1812.6 1014.7 L1814.6 1014.7 L1816.6 1014.8 L1818.6 1014.9 L1820.6 1014.9 L1822.6 1015 L1824.6 1015 L1826.6 1015.1 L1828.6 1015.2 L1830.6 1015.2 L1832.6 1015.2 L1834.6 1015.3 L1836.6 1015.3 L1838.6 1015.4 L1840.6 1015.4 L1842.6 1015.4 L1844.6 1015.5 L1846.6 1015.5 L1848.6 1015.5 L1850.6 1015.6 L1852.6 1015.6 L1854.6 1015.6 L1855.7 1015.6" stroke="#52993f"/>
<path d="M190.6 1274.9 L192.6 1274.5 L194.6 1274 L196.6 1273.6 L198.6 1273.1 L200.6 1272.7 L202.6 1272.2 L204.6 1271.7 L206.6 1271.2 L208.6 1270.7 L210.6 1270.2 L212.6 1269.6 L214.6 1269.1 L216.6 1268.5 L218.6 1268 L220.6 1267.4 L222.6 1266.8 L224.6 1266.2 L226.6 1265.6 L228.6 1265 L230.6 1264.3 L232.6 1263.7 L234.6 1263 L236.6 1262.4 L238.6 1261.7 L240.6 1261 L242.6 1260.3 L244.6 1259.6 L246.6 1258.8 L248.6 1258.1 L250.6 1257.3 L252.6 1256.6 L254.6 1255.8 L256.6 1255 L258.6 1254.2 L260.6 1253.4 L262.6 1252.6 L264.6 1251.7 L266.6 1250.9 L268.6 1250 L270.6 1249.1 L272.6 1248.3 L274.6 1247.4 L276.6 1246.4 L278.6 1245.5 L280.6 1244.6 L282.6 1243.6 L284.6 1242.7 L286.6 1241.7 L288.6 1240.7 L290.6 1239.7 L292.6 1238.7 L294.6 1237.7 L296.6 1236.6 L298.6 1235.6 L300.6 1234.5 L302.6 1233.4 L304.6 1232.3 L306.6 1231.2 L308.6 1230.1 L310.6 1229 L312.6 1227.8 L314.6 1226.7 L316.6 1225.5 L318.6 1224.3 L320.6 1223.1 L322.6 1221.9 L324.6 1220.7 L326.6 1219.5 L328.6 1218.2 L330.6 1216.9 L332.6 1215.7 L334.6 1214.4 L336.6 1213.1 L338.6 1211.7 L340.6 1210.4 L342.6 1209 L344.6 1207.7 L346.6 1206.3 L348.6 1204.9 L350.6 1203.5 L352.6 1202.1 L354.6 1200.7 L356.6 1199.2 L358.6 1197.7 L360.6 1196.3 L362.6 1194.8 L364.6 1193.3 L366.6 1191.8 L368.6 1190.2 L370.6 1188.7 L372.6 1187.1 L374.6 1185.5 L376.6 1183.9 L378.6 1182.3 L380.6 1180.7 L382.6 1179.1 L384.6 1177.4 L386.6 1175.8 L388.6 1174.1 L390.6 1172.4 L392.6 1170.7 L394.6 1169 L396.6 1167.2 L398.6 1165.5 L400.6 1163.7 L402.6 1161.9 L404.6 1160.1 L406.6 1158.3 L408.6 1156.4 L410.6 1154.6 L412.6 1152.7 L414.6 1150.9 L416.6 1149 L418.6 1147.1 L420.6 1145.1 L422.6 1143.2 L424.6 1141.2 L426.6 1139.3 L428.6 1137.3 L430.6 1135.3 L432.6 1133.3 L434.6 1131.2 L436.6 1129.2 L438.6 1127.1 L440.6 1125 L442.6 1122.9 L444.6 1120.8 L446.6 1118.7 L448.6 1116.5 L450.6 1114.4 L452.6 1112.2 L454.6 1110 L456.6 1107.8 L458.6 1105.6 L460.6 1103.3 L462.6 1101.1 L464.6 1098.8 L466.6 1096.5 L468.6 1094.2 L470.6 1091.9 L472.6 1089.6 L474.6 1087.2 L476.6 1084.9 L478.6 1082.5 L480.6 1080.1 L482.6 1077.8 L484.6 1075.4 L486.6 1072.9 L488.6 1070.5 L490.6 1068.1 L492.6 1065.6 L494.6 1063.1 L496.6 1060.7 L498.6 1058.2 L500.6 1055.7 L502.6 1053.2 L504.6 1050.6 L506.6 1048.1 L508.6 1045.5 L510.6 1043 L512.6 1040.4 L514.6 1037.8 L516.6 1035.2 L518.6 1032.6 L520.6 1030 L522.6 1027.4 L524.6 1024.8 L526.6 1022.1 L528.6 1019.5 L530.6 1016.8 L532.6 1014.2 L534.6 1011.5 L536.6 1008.8 L538.6 1006.1 L540.6 1003.4 L542.6 1000.7 L544.6 998 L546.6 995.3 L548.6 992.5 L550.6 989.8 L552.6 987.1 L554.6 984.3 L556.6 981.5 L558.6 978.8 L560.6 976 L562.6 973.2 L564.6 970.4 L566.6 967.6 L568.6 964.8 L570.6 962 L572.6 959.2 L574.6 956.4 L576.6 953.6 L578.6 950.8 L580.6 947.9 L582.6 945.1 L584.6 942.2 L586.6 939.4 L588.6 936.6 L590.6 933.7 L592.6 930.8 L594.6 928 L596.6 925.1 L598.6 922.2 L600.6 919.4 L602.6 916.5 L604.6 913.6 L606.6 910.7 L608.6 907.8 L610.6 905 L612.6 902.1 L614.6 899.2 L616.6 896.3 L618.6 893.4 L620.6 890.5 L622.6 887.6 L624.6 884.7 L626.6 881.8 L628.6 878.9 L630.6 876 L632.6 873.1 L634.6 870.2 L636.6 867.3 L638.6 864.3 L640.6 861.4 L642.6 858.5 L644.6 855.6 L646.6 852.7 L648.6 849.8 L650.6 846.9 L652.6 844 L654.6 841.1 L656.6 838.2 L658.6 835.3 L660.6 832.4 L662.6 829.5 L664.6 826.6 L666.6 823.7 L668.6 820.8 L670.6 818 L672.6 815.1 L674.6 812.2 L676.6 809.3 L678.6 806.4 L680.6 803.6 L682.6 800.7 L684.6 797.8 L686.6 795 L688.6 792.1 L690.6 789.2 L692.6 786.4 L694.6 783.5 L696.6 780.7 L698.6 777.9 L700.6 775 L702.6 772.2 L704.6 769.4 L706.6 766.6 L708.6 763.8 L710.6 761 L712.6 758.2 L714.6 755.4 L716.6 752.6 L718.6 749.8 L720.6 747 L722.6 744.3 L724.6 741.5 L726.6 738.8 L728.6 736 L730.6 733.3 L732.6 730.6 L734.6 727.8 L736.6 725.1 L738.6 722.4 L740.6 719.7 L742.6 717.1 L744.6 714.4 L746.6 711.7 L748.6 709.1 L750.6 706.4 L752.6 703.8 L754.6 701.2 L756.6 698.6 L758.6 696 L760.6 693.4 L762.6 690.8 L764.6 688.2 L766.6 685.7 L768.6 683.2 L770.6 680.6 L772.6 678.1 L774.6 675.6 L776.6 673.1 L778.6 670.6 L780.6 668.2 L782.6 665.7 L784.6 663.3 L786.6 660.9 L788.6 658.5 L790.6 656.1 L792.6 653.7 L794.6 651.3 L796.6 649 L798.6 646.7 L800.6 644.3 L802.6 642 L804.6 639.7 L806.6 637.5 L808.6 635.2 L810.6 633 L812.6 630.8 L814.6 628.6 L816.6 626.4 L818.6 624.2 L820.6 622.1 L822.6 619.9 L824.6 617.8 L826.6 615.7 L828.6 613.6 L830.6 611.6 L832.6 609.5 L834.6 607.5 L836.6 605.5 L838.6 603.5 L840.6 601.6 L842.6 599.6 L844.6 597.7 L846.6 595.8 L848.6 593.9 L850.6 592.1 L852.6 590.2 L854.6 588.4 L856.6 586.6 L858.6 584.8 L860.6 583.1 L862.6 581.3 L864.6 579.6 L866.6 577.9 L868.6 576.3 L870.6 574.6 L872.6 573 L874.6 571.4 L876.6 569.8 L878.6 568.3 L880.6 566.7 L882.6 565.2 L884.6 563.7 L886.6 562.2 L888.6 560.8 L890.6 559.4 L892.6 558 L894.6 556.6 L896.6 555.2 L898.6 553.9 L900.6 552.6 L902.6 551.3 L904.6 550 L906.6 548.8 L908.6 547.6 L910.6 546.4 L912.6 545.2 L914.6 544 L916.6 542.9 L918.6 541.8 L920.6 540.7 L922.6 539.7 L924.6 538.6 L926.6 537.6 L928.6 536.6 L930.6 535.7 L932.6 534.7 L934.6 533.8 L936.6 532.9 L938.6 532.1 L940.6 531.2 L942.6 530.4 L944.6 529.6 L946.6 528.8 L948.6 528.1 L950.6 527.4 L952.6 526.7 L954.6 526 L956.6 525.4 L958.6 524.7 L960.6 524.1 L962.6 523.6 L964.6 523 L966.6 522.5 L968.6 522 L970.6 521.5 L972.6 521.1 L974.6 520.7 L976.6 520.3 L978.6 519.9 L980.6 519.5 L982.6 519.2 L984.6 518.9 L986.6 518.7 L988.6 518.4 L990.6 518.2 L992.6 518 L994.6 517.8 L996.6 517.7 L998.6 517.6 L1000.6 517.5 L1002.6 517.4 L1004.6 517.4 L1006.6 517.4 L1008.6 517.4 L1010.6 517.4 L1012.6 517.5 L1014.6 517.6 L1016.6 517.7 L1018.6 517.9 L1020.6 518 L1022.6 518.2 L1024.6 518.4 L1026.6 518.7 L1028.6 519 L1030.6 519.2 L1032.6 519.6 L1034.6 519.9 L1036.6 520.3 L1038.6 520.7 L1040.6 521.1 L1042.6 521.5 L1044.6 522 L1046.6 522.5 L1048.6 523 L1050.6 523.5 L1052.6 524.1 L1054.6 524.7 L1056.6 525.3 L1058.6 525.9 L1060.6 526.6 L1062.6 527.3 L1064.6 528 L1066.6 528.7 L1068.6 529.5 L1070.6 530.2 L1072.6 531 L1074.6 531.8 L1076.6 532.7 L1078.6 533.5 L1080.6 534.4 L1082.6 535.3 L1084.6 536.3 L1086.6 537.2 L1088.6 538.2 L1090.6 539.2 L1092.6 540.2 L1094.6 541.3 L1096.6 542.3 L1098.6 543.4 L1100.6 544.5 L1102.6 545.7 L1104.6 546.8 L1106.6 548 L1108.6 549.2 L1110.6 550.4 L1112.6 551.6 L1114.6 552.9 L1116.6 554.2 L1118.6 555.5 L1120.6 556.8 L1122.6 558.1 L1124.6 559.5 L1126.6 560.9 L1128.6 562.3 L1130.6 563.7 L1132.6 565.1 L1134.6 566.6 L1136.6 568.1 L1138.6 569.6 L1140.6 571.1 L1142.6 572.6 L1144.6 574.2 L1146.6 575.8 L1148.6 577.4 L1150.6 579 L1152.6 580.7 L1154.6 582.3 L1156.6 584 L1158.6 585.7 L1160.6 587.4 L1162.6 589.1 L1164.6 590.9 L1166.6 592.7 L1168.6 594.5 L1170.6 596.3 L1172.6 598.1 L1174.6 599.9 L1176.6 601.8 L1178.6 603.7 L1180.6 605.6 L1182.6 607.5 L1184.6 609.4 L1186.6 611.4 L1188.6 613.4 L1190.6 615.4 L1192.6 617.4 L1194.6 619.4 L1196.6 621.4 L1198.6 623.5 L1200.6 625.6 L1202.6 627.7 L1204.6 629.8 L1206.6 631.9 L1208.6 634 L1210.6 636.2 L1212.6 638.3 L1214.6 640.5 L1216.6 642.7 L1218.6 644.9 L1220.6 647.1 L1222.6 649.4 L1224.6 651.6 L1226.6 653.9 L1228.6 656.2 L1230.6 658.4 L1232.6 660.7 L1234.6 663 L1236.6 665.4 L1238.6 667.7 L1240.6 670 L1242.6 672.4 L1244.6 674.7 L1246.6 677.1 L1248.6 679.5 L1250.6 681.8 L1252.6 684.2 L1254.6 686.6 L1256.6 689.1 L1258.6 691.5 L1260.6 693.9 L1262.6 696.3 L1264.6 698.8 L1266.6 701.2 L1268.6 703.7 L1270.6 706.1 L1272.6 708.6 L1274.6 711 L1276.6 713.5 L1278.6 716 L1280.6 718.5 L1282.6 720.9 L1284.6 723.4 L1286.6 725.9 L1288.6 728.4 L1290.6 730.9 L1292.6 733.4 L1294.6 735.9 L1296.6 738.4 L1298.6 740.9 L1300.6 743.4 L1302.6 745.9 L1304.6 748.4 L1306.6 750.9 L1308.6 753.4 L1310.6 755.9 L1312.6 758.4 L1314.6 760.9 L1316.6 763.5 L1318.6 766 L1320.6 768.5 L1322.6 770.9 L1324.6 773.4 L1326.6 775.9 L1328.6 778.4 L1330.6 780.9 L1332.6 783.4 L1334.6 785.9 L1336.6 788.3 L1338.6 790.8 L1340.6 793.3 L1342.6 795.7 L1344.6 798.2 L1346.6 800.6 L1348.6 803.1 L1350.6 805.5 L1352.6 807.9 L1354.6 810.4 L1356.6 812.8 L1358.6 815.2 L1360.6 817.6 L1362.6 820 L1364.6 822.3 L1366.6 824.7 L1368.6 827.1 L1370.6 829.4 L1372.6 831.8 L1374.6 834.1 L1376.6 836.4 L1378.6 838.7 L1380.6 841 L1382.6 843.3 L1384.6 845.6 L1386.6 847.9 L1388.6 850.2 L1390.6 852.4 L1392.6 854.6 L1394.6 856.9 L1396.6 859.1 L1398.6 861.3 L1400.6 863.5 L1402.6 865.7 L1404.6 867.8 L1406.6 870 L1408.6 872.2 L1410.6 874.3 L1412.6 876.4 L1414.6 878.5 L1416.6 880.6 L1418.6 882.7 L1420.6 884.8 L1422.6 886.9 L1424.6 888.9 L1426.6 891 L1428.6 893 L1430.6 895 L1432.6 897 L1434.6 899 L1436.6 901 L1438.6 902.9 L1440.6 904.9 L1442.6 906.8 L1444.6 908.7 L1446.6 910.7 L1448.6 912.6 L1450.6 914.4 L1452.6 916.3 L1454.6 918.2 L1456.6 920 L1458.6 921.8 L1460.6 923.6 L1462.6 925.4 L1464.6 927.2 L1466.6 929 L1468.6 930.8 L1470.6 932.5 L1472.6 934.2 L1474.6 935.9 L1476.6 937.6 L1478.6 939.3 L1480.6 941 L1482.6 942.7 L1484.6 944.3 L1486.6 945.9 L1488.6 947.5 L1490.6 949.1 L1492.6 950.7 L1494.6 952.3 L1496.6 953.8 L1498.6 955.3 L1500.6 956.8 L1502.6 958.3 L1504.6 959.8 L1506.6 961.3 L1508.6 962.7 L1510.6 964.2 L1512.6 965.6 L1514.6 967 L1516.6 968.4 L1518.6 969.7 L1520.6 971.1 L1522.6 972.4 L1524.6 973.7 L1526.6 975 L1528.6 976.3 L1530.6 977.6 L1532.6 978.8 L1534.6 980.1 L1536.6 981.3 L1538.6 982.5 L1540.6 983.6 L1542.6 984.8 L1544.6 985.9 L1546.6 987.1 L1548.6 988.2 L1550.6 989.3 L1552.6 990.3 L1554.6 991.4 L1556.6 992.4 L1558.6 993.4 L1560.6 994.4 L1562.6 995.4 L1564.6 996.3 L1566.6 997.3 L1568.6 998.2 L1570.6 999.1 L1572.6 1000 L1574.6 1000.8 L1576.6 1001.7 L1578.6 1002.5 L1580.6 1003.3 L1582.6 1004.1 L1584.6 1004.8 L1586.6 1005.6 L1588.6 1006.3 L1590.6 1007 L1592.6 1007.7 L1594.6 1008.4 L1596.6 1009 L1598.6 1009.7 L1600.6 1010.3 L1602.6 1010.9 L1604.6 1011.5 L1606.6 1012.1 L1608.6 1012.6 L1610.6 1013.2 L1612.6 1013.7 L1614.6 1014.2 L1616.6 1014.7 L1618.6 1015.1 L1620.6 1015.6 L1622.6 1016.1 L1624.6 1016.5 L1626.6 1016.9 L1628.6 1017.3 L1630.6 1017.7 L1632.6 1018.1 L1634.6 1018.4 L1636.6 1018.8 L1638.6 1019.1 L1640.6 1019.4 L1642.6 1019.7 L1644.6 1020 L1646.6 1020.3 L1648.6 1020.5 L1650.6 1020.8 L1652.6 1021 L1654.6 1021.3 L1656.6 1021.5 L1658.6 1021.7 L1660.6 1021.9 L1662.6 1022 L1664.6 1022.2 L1666.6 1022.4 L1668.6 1022.5 L1670.6 1022.7 L1672.6 1022.8 L1674.6 1022.9 L1676.6 1023 L1678.6 1023.1 L1680.6 1023.2 L1682.6 1023.3 L1684.6 1023.4 L1686.6 1023.4 L1688.6 1023.5 L1690.6 1023.5 L1692.6 1023.5 L1694.6 1023.6 L1696.6 1023.6 L1698.6 1023.6 L1700.6 1023.6 L1702.6 1023.6 L1704.6 1023.6 L1706.6 1023.6 L1708.6 1023.5 L1710.6 1023.5 L1712.6 1023.5 L1714.6 1023.4 L1716.6 1023.4 L1718.6 1023.3 L1720.6 1023.2 L1722.6 1023.2 L1724.6 1023.1 L1726.6 1023 L1728.6 1022.9 L1730.6 1022.8 L1732.6 1022.7 L1734.6 1022.6 L1736.6 1022.5 L1738.6 1022.4 L1740.6 1022.3 L1742.6 1022.2 L1744.6 1022.1 L1746.6 1022 L1748.6 1021.8 L1750.6 1021.7 L1752.6 1021.6 L1754.6 1021.4 L1756.6 1021.3 L1758.6 1021.2 L1760.6 1021 L1762.6 1020.9 L1764.6 1020.7 L1766.6 1020.6 L1768.6 1020.4 L1770.6 1020.3 L1772.6 1020.1 L1774.6 1020 L1776.6 1019.8 L1778.6 1019.7 L1780.6 1019.5 L1782.6 1019.4 L1784.6 1019.2 L1786.6 1019.1 L1788.6 1018.9 L1790.6 1018.8 L1792.6 1018.6 L1794.6 1018.5 L1796.6 1018.3 L1798.6 1018.2 L1800.6 1018.1 L1802.6 1017.9 L1804.6 1017.8 L1806.6 1017.6 L1808.6 1017.5 L1810.6 1017.4 L1812.6 1017.3 L1814.6 1017.1 L1816.6 1017 L1818.6 1016.9 L1820.6 1016.8 L1822.6 1016.7 L1824.6 1016.6 L1826.6 1016.5 L1828.6 1016.4 L1830.6 1016.3 L1832.6 1016.2 L1834.6 1016.1 L1836.6 1016 L1838.6 1016 L1840.6 1015.9 L1842.6 1015.8 L1844.6 1015.8 L1846.6 1015.7 L1848.6 1015.7 L1850.6 1015.7 L1852.6 1015.6 L1854.6 1015.6 L1855.7 1015.6" stroke="#e8873b"/>
<path d="M190.6 1300 L192.6 1300.1 L194.6 1300.2 L196.6 1300.3 L198.6 1300.4 L200.6 1300.5 L202.6 1300.6 L204.6 1300.7 L206.6 1300.9 L208.6 1301 L210.6 1301.1 L212.6 1301.2 L214.6 1301.3 L216.6 1301.5 L218.6 1301.6 L220.6 1301.7 L222.6 1301.9 L224.6 1302 L226.6 1302.1 L228.6 1302.3 L230.6 1302.4 L232.6 1302.5 L234.6 1302.7 L236.6 1302.8 L238.6 1303 L240.6 1303.1 L242.6 1303.3 L244.6 1303.5 L246.6 1303.6 L248.6 1303.8 L250.6 1304 L252.6 1304.1 L254.6 1304.3 L256.6 1304.5 L258.6 1304.7 L260.6 1304.8 L262.6 1305 L264.6 1305.2 L266.6 1305.4 L268.6 1305.6 L270.6 1305.8 L272.6 1306 L274.6 1306.2 L276.6 1306.4 L278.6 1306.6 L280.6 1306.9 L282.6 1307.1 L284.6 1307.3 L286.6 1307.5 L288.6 1307.8 L290.6 1308 L292.6 1308.2 L294.6 1308.5 L296.6 1308.7 L298.6 1309 L300.6 1309.2 L302.6 1309.5 L304.6 1309.7 L306.6 1310 L308.6 1310.3 L310.6 1310.5 L312.6 1310.8 L314.6 1311.1 L316.6 1311.4 L318.6 1311.7 L320.6 1312 L322.6 1312.3 L324.6 1312.6 L326.6 1312.9 L328.6 1313.2 L330.6 1313.5 L332.6 1313.8 L334.6 1314.2 L336.6 1314.5 L338.6 1314.8 L340.6 1315.2 L342.6 1315.5 L344.6 1315.9 L346.6 1316.2 L348.6 1316.6 L350.6 1316.9 L352.6 1317.3 L354.6 1317.7 L356.6 1318.1 L358.6 1318.5 L360.6 1318.9 L362.6 1319.2 L364.6 1319.6 L366.6 1320.1 L368.6 1320.5 L370.6 1320.9 L372.6 1321.3 L374.6 1321.7 L376.6 1322.2 L378.6 1322.6 L380.6 1323 L382.6 1323.5 L384.6 1324 L386.6 1324.4 L388.6 1324.9 L390.6 1325.4 L392.6 1325.8 L394.6 1326.3 L396.6 1326.8 L398.6 1327.3 L400.6 1327.8 L402.6 1328.3 L404.6 1328.8 L406.6 1329.4 L408.6 1329.9 L410.6 1330.4 L412.6 1331 L414.6 1331.5 L416.6 1332 L418.6 1332.6 L420.6 1333.2 L422.6 1333.7 L424.6 1334.3 L426.6 1334.9 L428.6 1335.5 L430.6 1336.1 L432.6 1336.7 L434.6 1337.3 L436.6 1337.9 L438.6 1338.6 L440.6 1339.2 L442.6 1339.8 L444.6 1340.5 L446.6 1341.1 L448.6 1341.8 L450.6 1342.4 L452.6 1343.1 L454.6 1343.8 L456.6 1344.5 L458.6 1345.2 L460.6 1345.9 L462.6 1346.6 L464.3 1347.2 M464.3 1347.2 L466.3 1341.5 L468.3 1335.8 L470.3 1330 L472.3 1324.3 L474.3 1318.6 L476.3 1312.9 L478.3 1307.3 L480.3 1301.6 L482.3 1295.9 L484.3 1290.2 L486.3 1284.6 L488.3 1278.9 L490.3 1273.3 L492.3 1267.7 L494.3 1262.1 L496.3 1256.4 L498.3 1250.8 L500.3 1245.2 L502.3 1239.7 L504.3 1234.1 L506.3 1228.5 L508.3 1222.9 L510.3 1217.4 L512.3 1211.8 L514.3 1206.3 L516.3 1200.7 L518.3 1195.2 L520.3 1189.7 L522.3 1184.2 L524.3 1178.7 L526.3 1173.2 L528.3 1167.7 L530.3 1162.3 L532.3 1156.8 L534.3 1151.3 L536.3 1145.9 L538.3 1140.5 L540.3 1135 L542.3 1129.6 L544.3 1124.2 L546.3 1118.8 L548.3 1113.4 L550.3 1108 L552.3 1102.6 L554.3 1097.3 L556.3 1091.9 L558.3 1086.6 L560.3 1081.2 L562.3 1075.9 L564.3 1070.6 L566.3 1065.3 L568.3 1060 L570.3 1054.7 L572.3 1049.4 L574.3 1044.1 L576.3 1038.9 L578.3 1033.6 L580.3 1028.4 L582.3 1023.1 L584.3 1017.9 L586.3 1012.7 L588.3 1007.5 L590.3 1002.3 L592.3 997.1 L594.3 992 L596.3 986.8 L598.3 981.6 L600.3 976.5 L602.3 971.4 L604.3 966.3 L606.3 961.1 L608.3 956 L610.3 951 L612.3 945.9 L614.3 940.8 L616.3 935.7 L618.3 930.7 L620.3 925.7 L622.3 920.6 L624.3 915.6 L626.3 910.6 L628.3 905.6 L630.3 900.6 L632.3 895.7 L634.3 890.7 L636.3 885.8 L638.3 880.8 L640.3 875.9 L642.3 871 L644.3 866.1 L646.3 861.2 L648.3 856.3 L650.3 851.4 L652.3 846.6 L654.3 841.7 L656.3 836.9 L658.3 832 L660.3 827.2 L662.3 822.4 L664.3 817.6 L666.3 812.8 L668.3 808.1 L670.3 803.3 L672.3 798.6 L674.3 793.9 L676.3 789.2 L678.3 784.5 L680.3 779.8 L682.3 775.1 L684.3 770.5 L686.3 765.8 L688.3 761.2 L690.3 756.6 L692.3 752.1 L694.3 747.5 L696.3 743 L698.3 738.5 L700.3 734 L702.3 729.5 L704.3 725.1 L706.3 720.6 L708.3 716.2 L710.3 711.8 L712.3 707.5 L714.3 703.2 L716.3 698.9 L718.3 694.6 L720.3 690.3 L722.3 686.1 L724.3 681.9 L726.3 677.8 L728.3 673.6 L730.3 669.5 L732.3 665.4 L734.3 661.4 L736.3 657.4 L738.3 653.4 L740.3 649.4 L742.3 645.5 L744.3 641.6 L746.3 637.8 L748.3 633.9 L750.3 630.1 L752.3 626.4 L754.3 622.7 L756.3 619 L758.3 615.3 L760.3 611.7 L762.3 608.1 L764.3 604.6 L766.3 601.1 L768.3 597.6 L770.3 594.1 L772.3 590.7 L774.3 587.3 L776.3 584 L778.3 580.7 L780.3 577.4 L782.3 574.1 L784.3 570.9 L786.3 567.7 L788.3 564.5 L790.3 561.4 L792.3 558.3 L794.3 555.2 L796.3 552.1 L798.3 549.1 L800.3 546.1 L802.3 543.1 L804.3 540.2 L806.3 537.3 L808.3 534.4 L810.3 531.6 L812.3 528.7 L814.3 525.9 L816.3 523.2 L818.3 520.4 L820.3 517.7 L822.3 515 L824.3 512.3 L826.3 509.7 L828.3 507.1 L830.3 504.5 L832.3 501.9 L834.3 499.4 L836.3 496.9 L838.3 494.4 L840.3 491.9 L842.3 489.5 L844.3 487.1 L846.3 484.7 L848.3 482.3 L850.3 480 L852.3 477.6 L854.3 475.3 L856.3 473 L858.3 470.8 L860.3 468.5 L862.3 466.3 L864.3 464.1 L866.3 462 L868.3 459.8 L870.3 457.7 L872.3 455.6 L874.3 453.5 L876.3 451.4 L878.3 449.4 L880.3 447.4 L882.3 445.4 L884.3 443.4 L886.3 441.5 L888.3 439.6 L890.3 437.7 L892.3 435.9 L894.3 434 L896.3 432.2 L898.3 430.4 L900.3 428.7 L902.3 427 L904.3 425.3 L906.3 423.6 L908.3 421.9 L910.3 420.3 L912.3 418.7 L914.3 417.2 L916.3 415.7 L918.3 414.2 L920.3 412.7 L922.3 411.3 L924.3 409.9 L926.3 408.5 L928.3 407.1 L930.3 405.8 L932.3 404.5 L934.3 403.3 L936.3 402.1 L938.3 400.9 L940.3 399.7 L942.3 398.6 L944.3 397.5 L946.3 396.5 L948.3 395.5 L950.3 394.5 L952.3 393.6 L954.3 392.6 L956.3 391.8 L958.3 390.9 L960.3 390.1 L962.3 389.3 L964.3 388.6 L966.3 387.9 L968.3 387.2 L970.3 386.6 L972.3 385.9 L974.3 385.4 L976.3 384.8 L978.3 384.3 L980.3 383.8 L982.3 383.4 L984.3 383 L986.3 382.6 L988.3 382.2 L990.3 381.9 L992.3 381.6 L994.3 381.3 L996.3 381.1 L998.3 380.9 L1000.3 380.8 L1002.3 380.6 L1004.3 380.5 L1006.3 380.4 L1008.3 380.4 L1010.3 380.4 L1012.3 380.4 L1014.3 380.4 L1016.3 380.5 L1018.3 380.6 L1020.3 380.8 L1022.3 380.9 L1024.3 381.1 L1026.3 381.4 L1028.3 381.6 L1030.3 381.9 L1032.3 382.2 L1034.3 382.5 L1036.3 382.9 L1038.3 383.3 L1040.3 383.7 L1042.3 384.2 L1044.3 384.7 L1046.3 385.2 L1048.3 385.7 L1050.3 386.3 L1052.3 386.9 L1054.3 387.5 L1056.3 388.1 L1058.3 388.8 L1060.3 389.5 L1062.3 390.2 L1064.3 391 L1066.3 391.8 L1068.3 392.6 L1070.3 393.4 L1072.3 394.3 L1074.3 395.2 L1076.3 396.1 L1078.3 397 L1080.3 398 L1082.3 399 L1084.3 400 L1086.3 401 L1088.3 402.1 L1090.3 403.2 L1092.3 404.4 L1094.3 405.5 L1096.3 406.7 L1098.3 407.9 L1100.3 409.2 L1102.3 410.4 L1104.3 411.7 L1106.3 413.1 L1108.3 414.4 L1110.3 415.8 L1112.3 417.3 L1114.3 418.7 L1116.3 420.2 L1118.3 421.7 L1120.3 423.2 L1122.3 424.8 L1124.3 426.4 L1126.3 428.1 L1128.3 429.7 L1130.3 431.4 L1132.3 433.2 L1134.3 434.9 L1136.3 436.7 L1138.3 438.5 L1140.3 440.4 L1142.3 442.3 L1144.3 444.2 L1146.3 446.2 L1148.3 448.2 L1150.3 450.2 L1152.3 452.3 L1154.3 454.3 L1156.3 456.5 L1158.3 458.6 L1160.3 460.8 L1162.3 463 L1164.3 465.2 L1166.3 467.5 L1168.3 469.8 L1170.3 472.1 L1172.3 474.4 L1174.3 476.8 L1176.3 479.2 L1178.3 481.5 L1180.3 483.9 L1182.3 486.4 L1184.3 488.8 L1186.3 491.3 L1188.3 493.7 L1190.3 496.2 L1192.3 498.7 L1194.3 501.2 L1196.3 503.7 L1198.3 506.2 L1200.3 508.7 L1202.3 511.3 L1204.3 513.9 L1206.3 516.5 L1208.3 519.1 L1210.3 521.8 L1212.3 524.5 L1214.3 527.2 L1216.3 530 L1218.3 532.8 L1220.3 535.7 L1222.3 538.5 L1224.3 541.5 L1226.3 544.5 L1228.3 547.5 L1230.3 550.5 L1232.3 553.6 L1234.3 556.7 L1236.3 559.8 L1238.3 563 L1240.3 566.2 L1242.3 569.5 L1244.3 572.7 L1246.3 576 L1248.3 579.4 L1250.3 582.7 L1252.3 586.1 L1254.3 589.5 L1256.3 593 L1258.3 596.4 L1260.3 599.9 L1262.3 603.4 L1264.3 606.9 L1266.3 610.5 L1268.3 614.1 L1270.3 617.7 L1272.3 621.3 L1274.3 624.9 L1276.3 628.5 L1278.3 632.2 L1280.3 635.9 L1282.3 639.6 L1284.3 643.3 L1286.3 647 L1288.3 650.7 L1290.3 654.5 L1292.3 658.2 L1294.3 662 L1296.3 665.7 L1298.3 669.5 L1300.3 673.3 L1302.3 677.1 L1304.3 680.9 L1306.3 684.7 L1308.3 688.5 L1310.3 692.3 L1312.3 696.2 L1314.3 700 L1316.3 703.9 L1318.3 707.7 L1320.3 711.6 L1322.3 715.6 L1324.3 719.5 L1326.3 723.5 L1328.3 727.6 L1330.3 731.7 L1332.3 735.8 L1334.3 740 L1336.3 744.2 L1338.3 748.5 L1340.3 752.8 L1342.3 757.2 L1344.3 761.6 L1346.3 766 L1348.3 770.5 L1350.3 775 L1352.3 779.6 L1354.3 784.1 L1356.3 788.7 L1358.3 793.3 L1360.3 797.9 L1362.3 802.5 L1364.3 807.1 L1366.3 811.8 L1368.3 816.4 L1370.3 821 L1372.3 825.6 L1374.3 830.2 L1376.3 834.8 L1378.3 839.4 L1380.3 843.9 L1382.3 848.5 L1384.3 853.1 L1386.3 857.6 L1388.3 862.2 L1390.3 866.7 L1392.3 871.3 L1394.3 875.9 L1396.3 880.4 L1398.3 885 L1400.3 889.6 L1402.3 894.2 L1404.3 898.8 L1406.3 903.5 L1408.3 908.1 L1410.3 912.8 L1412.3 917.5 L1414.3 922.2 L1416.3 926.9 L1418.3 931.7 L1420.3 936.5 L1422.3 941.3 L1424.3 946.2 L1426.3 951 L1428.3 956 L1430.3 960.9 L1432.3 965.9 L1434.3 970.9 L1436.3 976 L1438.3 981.1 L1440.3 986.3 L1442.3 991.5 L1444.3 996.7 L1446.3 1002 L1448.3 1007.3 L1450.3 1012.7 L1452.3 1018.2 L1454.3 1023.7 L1456.3 1029.3 L1458.3 1034.9 L1460.3 1040.6 L1462.3 1046.3 L1464.3 1052.1 L1466.3 1058 L1468.3 1064 L1470.3 1070 L1472.3 1076.1 L1474.3 1082.2 L1476.3 1088.4 L1478.3 1094.7 L1480.3 1101.1 L1481.5 1105 M1481.5 1105 L1483.5 1103.7 L1485.5 1102.5 L1487.5 1101.2 L1489.5 1100 L1491.5 1098.7 L1493.5 1097.5 L1495.5 1096.3 L1497.5 1095.1 L1499.5 1093.9 L1501.5 1092.7 L1503.5 1091.6 L1505.5 1090.4 L1507.5 1089.3 L1509.5 1088.2 L1511.5 1087 L1513.5 1085.9 L1515.5 1084.8 L1517.5 1083.8 L1519.5 1082.7 L1521.5 1081.6 L1523.5 1080.6 L1525.5 1079.5 L1527.5 1078.5 L1529.5 1077.5 L1531.5 1076.5 L1533.5 1075.5 L1535.5 1074.5 L1537.5 1073.5 L1539.5 1072.5 L1541.5 1071.6 L1543.5 1070.6 L1545.5 1069.7 L1547.5 1068.8 L1549.5 1067.8 L1551.5 1066.9 L1553.5 1066 L1555.5 1065.1 L1557.5 1064.3 L1559.5 1063.4 L1561.5 1062.5 L1563.5 1061.7 L1565.5 1060.8 L1567.5 1060 L1569.5 1059.2 L1571.5 1058.4 L1573.5 1057.6 L1575.5 1056.8 L1577.5 1056 L1579.5 1055.2 L1581.5 1054.4 L1583.5 1053.7 L1585.5 1052.9 L1587.5 1052.2 L1589.5 1051.4 L1591.5 1050.7 L1593.5 1050 L1595.5 1049.3 L1597.5 1048.6 L1599.5 1047.9 L1601.5 1047.2 L1603.5 1046.5 L1605.5 1045.9 L1607.5 1045.2 L1609.5 1044.6 L1611.5 1043.9 L1613.5 1043.3 L1615.5 1042.6 L1617.5 1042 L1619.5 1041.4 L1621.5 1040.8 L1623.5 1040.2 L1625.5 1039.6 L1627.5 1039 L1629.5 1038.5 L1631.5 1037.9 L1633.5 1037.3 L1635.5 1036.8 L1637.5 1036.2 L1639.5 1035.7 L1641.5 1035.1 L1643.5 1034.6 L1645.5 1034.1 L1647.5 1033.6 L1649.5 1033.1 L1651.5 1032.6 L1653.5 1032.1 L1655.5 1031.6 L1657.5 1031.1 L1659.5 1030.6 L1661.5 1030.2 L1663.5 1029.7 L1665.5 1029.3 L1667.5 1028.8 L1669.5 1028.4 L1671.5 1027.9 L1673.5 1027.5 L1675.5 1027.1 L1677.5 1026.6 L1679.5 1026.2 L1681.5 1025.8 L1683.5 1025.4 L1685.5 1025 L1687.5 1024.6 L1689.5 1024.2 L1691.5 1023.9 L1693.5 1023.5 L1695.5 1023.1 L1697.5 1022.8 L1699.5 1022.4 L1701.5 1022 L1703.5 1021.7 L1705.5 1021.3 L1707.5 1021 L1709.5 1020.7 L1711.5 1020.3 L1713.5 1020 L1715.5 1019.7 L1717.5 1019.4 L1719.5 1019 L1721.5 1018.7 L1723.5 1018.4 L1725.5 1018.1 L1727.5 1017.8 L1729.5 1017.5 L1731.5 1017.2 L1733.5 1017 L1735.5 1016.7 L1737.5 1016.4 L1739.5 1016.1 L1741.5 1015.9 L1743.5 1015.6 L1745.5 1015.3 L1747.5 1015.1 L1749.5 1014.8 L1751.5 1014.6 L1753.5 1014.3 L1755.5 1014.1 L1757.5 1013.8 L1759.5 1013.6 L1761.5 1013.4 L1763.5 1013.1 L1765.5 1012.9 L1767.5 1012.7 L1769.5 1012.4 L1771.5 1012.2 L1773.5 1012 L1775.5 1011.8 L1777.5 1011.6 L1779.5 1011.4 L1781.5 1011.1 L1783.5 1010.9 L1785.5 1010.7 L1787.5 1010.5 L1789.5 1010.3 L1791.5 1010.1 L1793.5 1009.9 L1795.5 1009.7 L1797.5 1009.5 L1799.5 1009.4 L1801.5 1009.2 L1803.5 1009 L1805.5 1008.8 L1807.5 1008.6 L1809.5 1008.4 L1811.5 1008.3 L1813.5 1008.1 L1815.5 1007.9 L1817.5 1007.7 L1819.5 1007.5 L1821.5 1007.4 L1823.5 1007.2 L1825.5 1007 L1827.5 1006.9 L1829.5 1006.7 L1831.5 1006.5 L1833.5 1006.3 L1835.5 1006.2 L1837.5 1006 L1839.5 1005.8 L1841.5 1005.7 L1843.5 1005.5 L1845.5 1005.3 L1847.5 1005.2 L1849.5 1005 L1851.5 1004.8 L1853.5 1004.7 L1855.5 1004.5 L1855.7 1004.5" stroke="#3a70a9"/>
</g>
<line x1="1022" y1="329" x2="1022" y2="1400" stroke="#d62728" stroke-width="4" stroke-dasharray="6 6"/>
<line x1="1030" y1="690" x2="1073" y2="690" stroke="#8a2be2" stroke-width="3.5"/>
<path d="M1023.4 690 L1041.5 680.3 L1041.5 699.5 Z" fill="#8a2be2"/>
<rect x="778.5" y="274.5" width="60" height="3.6" fill="#3a70a9"/>
<text x="849.1" y="282.3" font-size="16" fill="#444" text-anchor="start" font-weight="normal" textLength="94.8" lengthAdjust="spacingAndGlyphs">230303-1600</text>
<rect x="966.9" y="274.5" width="60" height="3.6" fill="#e8873b"/>
<text x="1037.4" y="282.3" font-size="16" fill="#444" text-anchor="start" font-weight="normal" textLength="94.8" lengthAdjust="spacingAndGlyphs">230302-0600</text>
<rect x="1155.2" y="274.5" width="60" height="3.6" fill="#52993f"/>
<text x="1225.5" y="282.3" font-size="16" fill="#444" text-anchor="start" font-weight="normal" textLength="94.8" lengthAdjust="spacingAndGlyphs">230228-2000</text>
<rect x="1343" y="274.5" width="60" height="3.6" fill="#b93a33"/>
<text x="1413.2" y="282.3" font-size="16" fill="#444" text-anchor="start" font-weight="normal" textLength="94.8" lengthAdjust="spacingAndGlyphs">230227-1000</text>
<rect x="1856" y="247" width="16" height="1184.5" fill="#f4f5f7"/>
<path d="M1867 794.5 L1859.6 801.3 L1867 808.2 Z" fill="#c4c4c4"/>
<rect x="1861.7" y="824" width="4.3" height="31.8" rx="2" fill="#c4c4c4"/>
<path d="M1860.7 871.7 L1868 878.5 L1860.7 885.4 Z" fill="#c4c4c4"/>
<rect x="1943.9" y="367.8" width="813.8" height="2" fill="#ebebeb"/>
<rect x="1943.9" y="430.9" width="813.8" height="2" fill="#ebebeb"/>
<rect x="1943.9" y="493.7" width="813.8" height="2" fill="#ebebeb"/>
<rect x="2028" y="327" width="2" height="247" fill="#ebebeb"/>
<rect x="2209.7" y="327" width="2" height="247" fill="#ebebeb"/>
<rect x="2392.1" y="327" width="2" height="247" fill="#ebebeb"/>
<rect x="2575" y="327" width="2" height="247" fill="#ebebeb"/>
<text x="1933" y="377.6" font-size="24" fill="#444" text-anchor="end" font-weight="normal" textLength="59.2" lengthAdjust="spacingAndGlyphs">6000</text>
<text x="1933" y="440.7" font-size="24" fill="#444" text-anchor="end" font-weight="normal" textLength="59.2" lengthAdjust="spacingAndGlyphs">4000</text>
<text x="1933" y="503.5" font-size="24" fill="#444" text-anchor="end" font-weight="normal" textLength="59.2" lengthAdjust="spacingAndGlyphs">2000</text>
<text x="1933" y="567" font-size="24" fill="#444" text-anchor="end" font-weight="normal" textLength="14.8" lengthAdjust="spacingAndGlyphs">0</text>
<text x="2029" y="601.3" font-size="24" fill="#444" text-anchor="middle" font-weight="normal" textLength="80.3" lengthAdjust="spacingAndGlyphs">Feb 28</text>
<text x="2210.7" y="601.3" font-size="24" fill="#444" text-anchor="middle" font-weight="normal" textLength="66" lengthAdjust="spacingAndGlyphs">Mar 2</text>
<text x="2393.1" y="601.3" font-size="24" fill="#444" text-anchor="middle" font-weight="normal" textLength="66" lengthAdjust="spacingAndGlyphs">Mar 6</text>
<text x="2576" y="601.3" font-size="24" fill="#444" text-anchor="middle" font-weight="normal" textLength="66" lengthAdjust="spacingAndGlyphs">Mar 8</text>
<text x="2029" y="631.8" font-size="24" fill="#444" text-anchor="middle" font-weight="normal" textLength="59.3" lengthAdjust="spacingAndGlyphs">2023</text>
<g clip-path="url(#cpt)">
<path d="M1943.9 559.3 L1962.2 561.1 L1980.4 560.4 L1995 553.8 L2013.3 552 L2027.9 550.9 L2031.5 553.8 L2042.5 550.9 L2057.1 549.4 L2071.6 538.5 L2086.2 535.6 L2115.4 533.8 L2122.7 544.7 L2137.3 549.4 L2148.3 553.1 L2162.9 553.8 L2177.5 555.6 L2210.3 556.7 L2224.9 560.4 L2239.5 561.9 L2252.3 560.4 L2261.4 555.6 L2268.7 552 L2283.3 552 L2301.5 513.7 L2318 497.3 L2330.7 491.1 L2341.7 489.2 L2359.9 489.2 L2374.5 497.3 L2392.8 505.7 L2400 508.7 L2409.2 513.3 L2422 530.7 L2449.5 529.8 L2464.1 509.6 L2477 496.8 L2484.3 486.7 L2499.9 480.3 L2513.6 443.7 L2528.3 432.7 L2541.1 428.5 L2569.5 428.5 L2575.9 419.9 L2590.5 414.4 L2605.2 404.6 L2619.9 404.6 L2632.7 406.5 L2647.3 406.5 L2662 399.7 L2667.5 399.7 L2667.9 373.1 L2681.2 349.3 L2695.9 338.9 L2724.3 338.9 L2737.1 422.6 L2750.9 485.8 L2757.3 539.9" fill="none" stroke="#e9a23b" stroke-width="3.6" stroke-linejoin="round"/>
<path d="M1943.9 559.3 L1985.9 558.6 L2029 555.3 L2057.1 553.1 L2122.7 544.7 L2137.3 545.8 L2210.3 552 L2261.4 555.6 L2283.3 553.8 L2297.9 549.4 L2303.4 541.1 L2330.7 530.1 L2359.9 519.2 L2392.8 513 L2400 512.4 L2451.3 518.8 L2477 515.1 L2486.1 507.8 L2498.9 504.1 L2555.7 473 L2570.4 466.6 L2575.9 459.2 L2577.7 454.7 L2619.9 438.7 L2660.2 427.2 L2667.5 422.6 L2667.9 417.1 L2711.5 389.6 L2724.3 383.2 L2738 388.7 L2751.8 402.4 L2757.6 418.9 L2757.7 558.2 L1943.9 558.2 Z" fill="#6e1a80" fill-opacity="0.5" stroke="none"/>
<path d="M1943.9 559.3 L1985.9 558.6 L2029 555.3 L2057.1 553.1 L2122.7 544.7 L2137.3 545.8 L2210.3 552 L2261.4 555.6 L2283.3 553.8 L2297.9 549.4 L2303.4 541.1 L2330.7 530.1 L2359.9 519.2 L2392.8 513 L2400 512.4 L2451.3 518.8 L2477 515.1 L2486.1 507.8 L2498.9 504.1 L2555.7 473 L2570.4 466.6 L2575.9 459.2 L2577.7 454.7 L2619.9 438.7 L2660.2 427.2 L2667.5 422.6 L2667.9 417.1 L2711.5 389.6 L2724.3 383.2 L2738 388.7 L2751.8 402.4 L2757.6 418.9" fill="none" stroke="#6a0f7c" stroke-width="4" stroke-linejoin="round"/>
</g>
<rect x="1943.9" y="557" width="813.8" height="2.4" fill="#5a1a66"/>
<line x1="1944.8" y1="329" x2="1944.8" y2="574" stroke="#d62728" stroke-width="4" stroke-dasharray="6 6"/>
<rect x="2239.5" y="291.1" width="60.2" height="3.6" fill="#e9a23b"/>
<text x="2309.6" y="299.5" font-size="16" fill="#444" text-anchor="start" font-weight="normal" textLength="84.3" lengthAdjust="spacingAndGlyphs">Position PnL</text>
<rect x="2417.2" y="286.7" width="59.5" height="13.5" fill="#b784c0"/>
<rect x="2417.2" y="286.7" width="59.5" height="3.6" fill="#6a0f7c"/>
<text x="2486.9" y="299.5" font-size="16" fill="#444" text-anchor="start" font-weight="normal" textLength="91.2" lengthAdjust="spacingAndGlyphs">EMA(pnl, 14)</text>
<rect x="1872" y="638" width="885.7" height="15" fill="#f4f5f7"/>
<path d="M2290 649 L2295.3 643 L2300.6 649 Z" fill="#c4c4c4"/>
<rect x="2314.3" y="644.5" width="32.8" height="3" rx="1.5" fill="#c4c4c4"/>
<rect x="1934.1" y="738.6" width="823.6" height="2" fill="#ebebeb"/>
<rect x="1934.1" y="811.9" width="823.6" height="2" fill="#ebebeb"/>
<rect x="1934.1" y="959.3" width="823.6" height="2" fill="#ebebeb"/>
<rect x="2018.5" y="735" width="2" height="246" fill="#ebebeb"/>
<rect x="2202.7" y="735" width="2" height="246" fill="#ebebeb"/>
<rect x="2387.8" y="735" width="2" height="246" fill="#ebebeb"/>
<rect x="2571.7" y="735" width="2" height="246" fill="#ebebeb"/>
<text x="1922.8" y="748.4" font-size="24" fill="#444" text-anchor="end" font-weight="normal" textLength="44.4" lengthAdjust="spacingAndGlyphs">100</text>
<text x="1922.8" y="821.7" font-size="24" fill="#444" text-anchor="end" font-weight="normal" textLength="29.6" lengthAdjust="spacingAndGlyphs">50</text>
<text x="1922.8" y="895.8" font-size="24" fill="#444" text-anchor="end" font-weight="normal" textLength="14.8" lengthAdjust="spacingAndGlyphs">0</text>
<text x="1922.8" y="969.1" font-size="24" fill="#444" text-anchor="end" font-weight="normal" textLength="48.6" lengthAdjust="spacingAndGlyphs">−50</text>
<text x="2019.5" y="1008.5" font-size="24" fill="#444" text-anchor="middle" font-weight="normal" textLength="80.3" lengthAdjust="spacingAndGlyphs">Feb 28</text>
<text x="2203.7" y="1008.5" font-size="24" fill="#444" text-anchor="middle" font-weight="normal" textLength="66" lengthAdjust="spacingAndGlyphs">Mar 2</text>
<text x="2388.8" y="1008.5" font-size="24" fill="#444" text-anchor="middle" font-weight="normal" textLength="66" lengthAdjust="spacingAndGlyphs">Mar 6</text>
<text x="2572.7" y="1008.5" font-size="24" fill="#444" text-anchor="middle" font-weight="normal" textLength="66" lengthAdjust="spacingAndGlyphs">Mar 8</text>
<text x="2019.5" y="1039" font-size="24" fill="#444" text-anchor="middle" font-weight="normal" textLength="59.3" lengthAdjust="spacingAndGlyphs">2023</text>
<rect x="1934.1" y="886" width="823.6" height="2" fill="#444"/>
<g clip-path="url(#cpmid)"><path d="M1934.1 891 L1956.7 891 L1969.5 880 L2013.3 879.3 L2020.6 871.6 L2035.2 868 L2047.9 868 L2064.3 870.6 L2078.9 874.2 L2093.5 874.2 L2106.3 872.4 L2111.8 861.8 L2128.2 849.8 L2141 845.4 L2155.6 845.4 L2170.2 843.5 L2188.4 841.4 L2203.7 839.5 L2219.4 829 L2234 824.2 L2248.6 826.8 L2261.4 823.8 L2276 826.4 L2297.9 858.1 L2312.5 873.8 L2325.3 895.4 L2338 897.2 L2352.6 910.7 L2369 919.1 L2383.6 931.9 L2389.1 934.4 L2403.7 958.1 L2418.3 969.1 L2432.9 969.4 L2445.7 969.1 L2460.3 958.1 L2480.3 948.3 L2496.8 948.3 L2511.4 926.4 L2524.1 900.8 L2538.7 878.9 L2553.3 862.5 L2567.9 849.8 L2573.4 839.9 L2588 839.9 L2602.6 838.1 L2617.2 824.2 L2631.8 811.4 L2644.6 806.7 L2659.2 800.1 L2665.4 806.7 L2666.5 833.3 L2681 868 L2695.6 868 L2710.2 817.6 L2723 795 L2737.6 747.6 L2757.7 746.1" fill="none" stroke="#3a70a9" stroke-width="3.6" stroke-linejoin="round"/></g>
<line x1="1934.1" y1="737" x2="1934.1" y2="981" stroke="#d62728" stroke-width="4" stroke-dasharray="6 6"/>
<rect x="2080" y="697.6" width="59.2" height="3.6" fill="#3a70a9"/>
<text x="2150" y="705.5" font-size="16" fill="#444" text-anchor="start" font-weight="normal">Δ</text>
<rect x="2182.2" y="697.6" width="59.2" height="3.6" fill="#f4c08a"/>
<text x="2252.3" y="705.5" font-size="16" fill="#aaa" text-anchor="start" font-weight="normal">Γ</text>
<rect x="2283.3" y="697.6" width="59.2" height="3.6" fill="#99cc8f"/>
<text x="2353.4" y="705.5" font-size="16" fill="#aaa" text-anchor="start" font-weight="normal">Θ</text>
<rect x="2387.3" y="697.6" width="59.2" height="3.6" fill="#e49393"/>
<text x="2456.6" y="705.5" font-size="16" fill="#aaa" text-anchor="start" font-weight="normal">v</text>
<rect x="2488.4" y="697.6" width="59.2" height="3.6" fill="#c9b0e0"/>
<text x="2558" y="705.5" font-size="16" fill="#aaa" text-anchor="start" font-weight="normal">wv</text>
<rect x="1872" y="1045" width="885.7" height="16.4" fill="#f4f5f7"/>
<path d="M2273.7 1056 L2279 1050 L2284.3 1056 Z" fill="#c4c4c4"/>
<rect x="2299.7" y="1051.5" width="31" height="3" rx="1.5" fill="#c4c4c4"/>
<path d="M2345.5 1050 L2350.8 1056 L2356.1 1050 Z" fill="#c4c4c4"/>
<rect x="1943.9" y="1179.2" width="813.8" height="2" fill="#ebebeb"/>
<rect x="1943.9" y="1183.2" width="813.8" height="2" fill="#ebebeb"/>
<rect x="1943.9" y="1250" width="813.8" height="2" fill="#ebebeb"/>
<rect x="1943.9" y="1272.6" width="813.8" height="2" fill="#ebebeb"/>
<rect x="1943.9" y="1321.5" width="813.8" height="2" fill="#ebebeb"/>
<rect x="1943.9" y="1361.7" width="813.8" height="2" fill="#ebebeb"/>
<rect x="2028" y="1141" width="2" height="224" fill="#ebebeb"/>
<rect x="2209.7" y="1141" width="2" height="224" fill="#ebebeb"/>
<rect x="2391.8" y="1141" width="2" height="224" fill="#ebebeb"/>
<rect x="2575" y="1141" width="2" height="224" fill="#ebebeb"/>
<text x="1933" y="1189" font-size="24" fill="#444" text-anchor="end" font-weight="normal" textLength="59.2" lengthAdjust="spacingAndGlyphs">4050</text>
<text x="1933" y="1259.8" font-size="24" fill="#444" text-anchor="end" font-weight="normal" textLength="59.2" lengthAdjust="spacingAndGlyphs">4000</text>
<text x="1933" y="1331.3" font-size="24" fill="#444" text-anchor="end" font-weight="normal" textLength="59.2" lengthAdjust="spacingAndGlyphs">3950</text>
<text x="2029" y="1393" font-size="24" fill="#444" text-anchor="middle" font-weight="normal" textLength="80.3" lengthAdjust="spacingAndGlyphs">Feb 28</text>
<text x="2210.7" y="1393" font-size="24" fill="#444" text-anchor="middle" font-weight="normal" textLength="66" lengthAdjust="spacingAndGlyphs">Mar 2</text>
<text x="2392.8" y="1393" font-size="24" fill="#444" text-anchor="middle" font-weight="normal" textLength="66" lengthAdjust="spacingAndGlyphs">Mar 6</text>
<text x="2576" y="1393" font-size="24" fill="#444" text-anchor="middle" font-weight="normal" textLength="66" lengthAdjust="spacingAndGlyphs">Mar 8</text>
<text x="2029" y="1423.5" font-size="24" fill="#444" text-anchor="middle" font-weight="normal" textLength="59.3" lengthAdjust="spacingAndGlyphs">2023</text>
<g clip-path="url(#cpb)" fill="none" stroke-width="4" stroke-dasharray="8 6">
<path d="M1943.9 1230.6 L1954.9 1248.1 L1965.8 1234.2 L1976.8 1259.8 L1995 1248.1 L2013.3 1245.2 L2031.5 1237.9 L2046.1 1216 L2057.1 1216 L2068 1245.2 L2084.4 1293.3 L2097.2 1293.3 L2115.4 1243.3 L2137.3 1217.1 L2162.9 1217.1 L2175.6 1278 L2184.8 1281.6 L2210.3 1223.3 L2221.3 1226.9 L2250.5 1226.2 L2268.7 1250.6 L2294.2 1250.6 L2301.5 1292.6 L2319.8 1306.5 L2343.5 1333.5 L2359.9 1333.5 L2370.9 1298.1 L2385.5 1298.1 L2396.4 1316.3 L2403.7 1310.8 L2422 1329.1 L2436.6 1292.6 L2451.2 1330.9 L2487.6 1338.2 L2513.2 1340 L2527.8 1356.5 L2542.4 1356.5 L2557 1312.7 L2567.9 1312.7 L2578.9 1327.3 L2589.8 1327.3 L2604.4 1334.6 L2619 1334.6 L2633.6 1279.8 L2655.5 1277.3 L2666.5 1316.3 L2684.7 1301.7 L2695.6 1303.5 L2713.9 1329.1 L2724.8 1329.1 L2739.4 1272.5 L2754 1241.5 L2757.7 1157.6" stroke="#f4c1d0"/>
<path d="M1943.9 1237.9 L1965.8 1237.9 L1980.4 1263.4 L2020.6 1263.4 L2029.7 1282.4 L2057.1 1282.4 L2086.2 1268.1 L2111.8 1268.9 L2122.7 1296.2 L2148.3 1320 L2210.3 1321.8 L2239.5 1332 L2257.8 1328.4 L2281.5 1325.4 L2301.5 1274.3 L2330.7 1230.6 L2343.5 1228.7 L2359.9 1214.1 L2392.8 1186.8 L2418.3 1153.9 L2451.2 1153.2 L2469.4 1168.5 L2502.2 1183.1 L2531.4 1232.4 L2546 1248.8 L2567.9 1263.4 L2575.2 1269.6 L2604.4 1269.6 L2619 1274.3 L2637.3 1280.9 L2661 1283.5 L2670.1 1259.8 L2684.7 1245.2 L2695.6 1245.2 L2710.2 1254.3 L2724.8 1261.6 L2735.8 1287.1 L2750.4 1325.4 L2757.7 1354.6" stroke="#e9a23b"/>
</g>
<line x1="1944.4" y1="1146" x2="1944.4" y2="1367" stroke="#d62728" stroke-width="4" stroke-dasharray="6 6"/>
<line x1="2316.1" y1="1107.6" x2="2370.9" y2="1107.6" stroke="#e9a23b" stroke-width="4" stroke-dasharray="8 6"/>
<text x="2385.5" y="1113.5" font-size="16" fill="#444" text-anchor="start" font-weight="normal" textLength="74.8" lengthAdjust="spacingAndGlyphs">Underlying</text>
<line x1="2484" y1="1107.6" x2="2538.7" y2="1107.6" stroke="#f4c1d0" stroke-width="4" stroke-dasharray="8 6"/>
<text x="2553.3" y="1113.5" font-size="16" fill="#444" text-anchor="start" font-weight="normal" textLength="25.6" lengthAdjust="spacingAndGlyphs">VIX</text>
<text x="106.7" y="1511.2" font-size="32" fill="#212529" text-anchor="start" font-weight="bold" textLength="131.3" lengthAdjust="spacingAndGlyphs">Position:</text>
<rect x="249.6" y="1465.5" width="212.7" height="68.6" rx="8" fill="#fff" stroke="#c8c8c8" stroke-width="2"/>
<text x="265.2" y="1511.2" font-size="30" fill="#495057" text-anchor="start" font-weight="normal">3</text>
<path d="M418.2 1495.7 L434.2 1495.7 L426.2 1505.2 Z" fill="#444"/>
<text x="504.3" y="1511.2" font-size="32" fill="#212529" text-anchor="start" font-weight="bold" textLength="91.6" lengthAdjust="spacingAndGlyphs">As Of:</text>
<text x="606.2" y="1511.2" font-size="32" fill="#212529" text-anchor="start" font-weight="normal" textLength="300" lengthAdjust="spacingAndGlyphs">2023-02-27 10:00:00</text>
<rect x="1001" y="1483" width="86.7" height="39.8" rx="19.9" fill="#6fbf73"/>
<circle cx="1024.6" cy="1502.8" r="13.2" fill="#fff"/>
<path d="M1017.5 1503 L1022.5 1508 L1031.5 1497.5" fill="none" stroke="#6fbf73" stroke-width="3"/>
<text x="1045.6" y="1511.7" font-size="23" fill="#fff" text-anchor="start" font-weight="bold" textLength="35.4" lengthAdjust="spacingAndGlyphs">HD</text>
<circle cx="1116.8" cy="1502.8" r="20" fill="#6fbf73"/>
<text x="1117.2" y="1508" font-size="13.5" fill="#fff" text-anchor="middle" font-weight="normal" textLength="16.2" lengthAdjust="spacingAndGlyphs">3D</text>
<path d="M1120.5 1489.5 A14.5 14.5 0 0 1 1131.8 1501.5" fill="none" stroke="#fff" stroke-width="1.9"/>
<path d="M1116.5 1487.2 L1123.5 1487.3 L1120.8 1492.5 Z" fill="#fff"/>
<path d="M1102.2 1504.2 A14.5 14.5 0 0 0 1113 1516.8" fill="none" stroke="#fff" stroke-width="1.9"/>
<path d="M1117.8 1518.6 L1110.5 1518.6 L1113.2 1513.3 Z" fill="#fff"/>
<rect x="1146" y="1483" width="39.8" height="39.8" rx="6" fill="#569cd6"/>
<rect x="1195" y="1483" width="39.8" height="39.8" rx="6" fill="#569cd6"/>
<rect x="1244" y="1483" width="39.8" height="39.8" rx="6" fill="#569cd6"/>
<rect x="1293" y="1483" width="39.8" height="39.8" rx="6" fill="#569cd6"/>
<path d="M1159 1494 V1511 M1162 1502.5 L1173 1494.5 V1510.5 Z" fill="#fff" stroke="#fff" stroke-width="2.5"/>
<path d="M1219 1495 L1211 1502.8 L1219 1510.6" fill="none" stroke="#fff" stroke-width="3"/>
<path d="M1260 1495 L1268 1502.8 L1260 1510.6" fill="none" stroke="#fff" stroke-width="3"/>
<path d="M1320 1494 V1511 M1317 1502.5 L1306 1494.5 V1510.5 Z" fill="#fff" stroke="#fff" stroke-width="2.5"/>
<rect x="1445" y="1496.8" width="1311.5" height="14" rx="7" fill="#fff" stroke="#d6d6d6" stroke-width="2"/>
<rect x="1438" y="1480" width="24" height="47.6" rx="4" fill="#569cd6"/>
<path d="M42.5 26.5 L12.6 87.6 L76 87.6 Z" fill="#dfe7fb" stroke="#c9c3f5" stroke-width="6" stroke-linejoin="miter" opacity="0.6"/>
<path d="M42.5 26.5 L12.6 87.6 L76 87.6 Z" fill="#e2eafc" stroke="#0a0a0a" stroke-width="3.9" stroke-linejoin="miter"/>
<path d="M49.7 43.8 L53.3 46.8 L38.9 67.1 L52.1 61.7 L37.7 88 L33.6 88 L43.1 70.7 L32.4 72.5 Z" fill="#0a0a0a"/>
<text x="87.6" y="62.8" font-size="20" fill="#0a0a0a" text-anchor="start" font-weight="bold" textLength="15.6" lengthAdjust="spacingAndGlyphs" stroke="#0a0a0a" stroke-width="0.9">D</text>
<text x="107.7" y="62.8" font-size="20" fill="#0a0a0a" text-anchor="start" font-weight="bold" textLength="14.6" lengthAdjust="spacingAndGlyphs" stroke="#0a0a0a" stroke-width="0.9">E</text>
<text x="127.5" y="62.8" font-size="20" fill="#0a0a0a" text-anchor="start" font-weight="bold" textLength="14.3" lengthAdjust="spacingAndGlyphs" stroke="#0a0a0a" stroke-width="0.9">L</text>
<text x="144.7" y="62.8" font-size="20" fill="#0a0a0a" text-anchor="start" font-weight="bold" textLength="14.9" lengthAdjust="spacingAndGlyphs" stroke="#0a0a0a" stroke-width="0.9">T</text>
<text x="162.8" y="62.8" font-size="20" fill="#0a0a0a" text-anchor="start" font-weight="bold" textLength="17.6" lengthAdjust="spacingAndGlyphs" stroke="#0a0a0a" stroke-width="0.9">A</text>
<text x="185.6" y="62.8" font-size="20" fill="#0a0a0a" text-anchor="start" font-weight="bold" textLength="14.9" lengthAdjust="spacingAndGlyphs" stroke="#0a0a0a" stroke-width="0.9">R</text>
<text x="204.4" y="62.8" font-size="20" fill="#0a0a0a" text-anchor="start" font-weight="bold" textLength="17.6" lengthAdjust="spacingAndGlyphs" stroke="#0a0a0a" stroke-width="0.9">A</text>
<text x="225.5" y="62.8" font-size="20" fill="#0a0a0a" text-anchor="start" font-weight="bold" textLength="16.6" lengthAdjust="spacingAndGlyphs" stroke="#0a0a0a" stroke-width="0.9">Y</text>
<path d="M333 40.3 H389.9 Q394.9 40.3 394.9 45.3 V76.6 Q394.9 81.6 389.9 81.6 H333 Z" fill="#569cd6"/>
<path d="M333 40.3 H274.7 Q269.7 40.3 269.7 45.3 V76.6 Q269.7 81.6 274.7 81.6 H333" fill="#fff" stroke="#d0d3d6" stroke-width="2"/>
<text x="278.8" y="70" font-size="24" fill="#3b4248" text-anchor="start" font-weight="bold" textLength="44.9" lengthAdjust="spacingAndGlyphs">Live</text>
<text x="342.4" y="70" font-size="24" fill="#fff" text-anchor="start" font-weight="bold" textLength="43.2" lengthAdjust="spacingAndGlyphs">Sim</text>
<rect x="491.1" y="45" width="30" height="29.5" rx="4" fill="#3b4248"/>
<rect x="497.9" y="62.8" width="3" height="5.5" fill="#fff"/><rect x="504.5" y="58.3" width="3" height="10" fill="#fff"/><rect x="504.5" y="54.5" width="3" height="2.4" fill="#fff"/><rect x="511.2" y="51.2" width="3.2" height="17.1" fill="#fff"/>
<path d="M710 63.5 A13.6 13.6 0 1 0 710.5 54.8" fill="none" stroke="#3b4248" stroke-width="3.3"/>
<path d="M704.5 58.5 L714 58.5 L709 65.5 Z" fill="#3b4248"/>
<path d="M723.5 50 V60.5 L730 65" fill="none" stroke="#3b4248" stroke-width="3"/>
<path d="M878.5 55.5 L887.3 64.3 L896.1 55.5" fill="none" stroke="#3b4248" stroke-width="3"/>
<path d="M1274.5 55.5 L1283.3 64.3 L1292.1 55.5" fill="none" stroke="#3b4248" stroke-width="3"/>
<path d="M1659.5 55.5 L1668.3 64.3 L1677.1 55.5" fill="none" stroke="#3b4248" stroke-width="3"/>
<rect x="943" y="45.3" width="12.9" height="16.3" fill="#3b4248"/><rect x="943" y="65.2" width="12.9" height="9.5" fill="#3b4248"/><rect x="959.7" y="45.3" width="13" height="9.5" fill="#3b4248"/><rect x="959.7" y="59.1" width="13" height="15.6" fill="#3b4248"/>
<path d="M1177 49.5 L1163.3 71.5 L1190.7 71.5 Z" fill="none" stroke="#3b4248" stroke-width="3.1" stroke-linejoin="miter"/>
<path d="M1482.6 45 L1500.7 54.6 L1482.6 63.8 L1465 54.5 Z" fill="#3b4248"/>
<path d="M1471.2 62.3 L1482.6 68.3 L1494 62.3 V68.8 L1482.6 75 L1471.2 68.8 Z" fill="#3b4248"/>
<rect x="1498.6" y="55" width="2.2" height="12.8" fill="#3b4248"/>
<circle cx="1804.1" cy="59.8" r="14.6" fill="none" stroke="#3b4248" stroke-width="3.4"/>
<circle cx="1804.1" cy="59.8" r="7.6" fill="none" stroke="#3b4248" stroke-width="3.2"/>
<path d="M1800.3 46 L1807.9 46 L1806.4 53 L1801.8 53 Z" fill="#3b4248" transform="rotate(0 1804.1 59.8)"/>
<path d="M1800.3 46 L1807.9 46 L1806.4 53 L1801.8 53 Z" fill="#3b4248" transform="rotate(90 1804.1 59.8)"/>
<path d="M1800.3 46 L1807.9 46 L1806.4 53 L1801.8 53 Z" fill="#3b4248" transform="rotate(180 1804.1 59.8)"/>
<path d="M1800.3 46 L1807.9 46 L1806.4 53 L1801.8 53 Z" fill="#3b4248" transform="rotate(270 1804.1 59.8)"/>
<path d="M1983 73 L2003 55.5" stroke="#3b4248" stroke-width="4.6" fill="none"/>
<path d="M2001 57 L1999.5 52.5 A5.6 5.6 0 0 1 2007.5 45.2 L2004.2 48.8 L2005.2 52 L2008.5 53 L2011.8 49.5 A5.6 5.6 0 0 1 2004.5 57.5 Z" fill="#3b4248"/>
<path d="M2010.5 73.5 L2000.5 63.8" stroke="#3b4248" stroke-width="4.8" fill="none"/>
<path d="M1980.3 55 L1984.3 53 L1989.3 47 L1993 44.5 L1995.8 45.3 L1993.6 49.3 L1994.8 51.3 L1994.4 54 L1997.5 57.5 L1993.5 61.5 L1989.6 57.5 L1987 57.2 L1985.3 60.7 Z" fill="#3b4248"/>
<circle cx="2143.5" cy="60" r="16.5" fill="#3b4248"/>
<path d="M2138.2 55.2 A5.4 5.4 0 1 1 2146.5 59.5 Q2143.5 61.5 2143.5 64.5 V66" fill="none" stroke="#fff" stroke-width="3.3"/>
<rect x="2141.5" y="68.5" width="4" height="3.6" fill="#fff"/>
<path d="M2285 43.2 H2312.2 Q2314.9 43.2 2314.9 45.9 V67.1 Q2314.9 69.8 2312.2 69.8 H2289.5 L2282.3 76.5 V45.9 Q2282.3 43.2 2285 43.2 Z" fill="#3b4248"/>
<rect x="2288" y="50" width="20.2" height="3.3" fill="#fff"/><rect x="2288" y="55.2" width="20.2" height="3.2" fill="#fff"/><rect x="2288" y="60.2" width="13.8" height="3.2" fill="#fff"/>
<circle cx="2767.7" cy="59.3" r="31.7" fill="#f4eeea"/>
<circle cx="2768" cy="63.6" r="21.5" fill="none" stroke="#9a2e55" stroke-width="2.6"/>
<path d="M2768.7 34 L2743.5 77 L2793.5 77 Z" fill="#f3cdbf" stroke="#8b2a4c" stroke-width="4" stroke-linejoin="miter"/>
<rect x="2761.3" y="61.8" width="13.4" height="4.2" fill="#c98f6e"/>
<path d="M2810.5 55.5 L2820 65 L2829.5 55.5" fill="none" stroke="#569cd6" stroke-width="2.9"/>
<path d="M85.8 151.8 L102 166.9 H97.6 V180 H89.7 V170.8 H82.3 V180 H74 V166.9 H69.5 Z" fill="#4e96d0"/>
<path d="M407.6 177.1 L419.7 164.7 L428.3 173 L438.8 163.3" fill="none" stroke="#272b30" stroke-width="2.9" stroke-linejoin="round"/>
<circle cx="407.6" cy="177.1" r="2.7" fill="#272b30"/>
<circle cx="419.7" cy="164.7" r="2.7" fill="#272b30"/>
<circle cx="428.3" cy="173" r="2.7" fill="#272b30"/>
<circle cx="438.8" cy="163.3" r="2.7" fill="#272b30"/>
<path d="M428.3 151.7 Q429.6 155 432.9 156.3 Q429.6 157.6 428.3 160.9 Q427 157.6 423.7 156.3 Q427 155 428.3 151.7 Z" fill="#272b30"/>
<path d="M408.9 157.9 Q409.9 160.3 412.3 161.3 Q409.9 162.3 408.9 164.7 Q407.9 162.3 405.5 161.3 Q407.9 160.3 408.9 157.9 Z" fill="#272b30"/>
<rect x="721.8" y="152.2" width="29.4" height="29.5" rx="3.6" fill="#4e96d0"/>
<rect x="728.2" y="158.7" width="6.8" height="6.8" fill="#e6eef7"/>
<rect x="728.2" y="168.7" width="6.8" height="6.8" fill="#e6eef7"/>
<rect x="738.3" y="158.7" width="6.8" height="6.8" fill="#e6eef7"/>
<rect x="738.3" y="168.7" width="6.8" height="6.8" fill="#e6eef7"/>
<path d="M999.6 175.9 L1007.4 164.5 L1012.8 169.9 L1019.3 159 L1022.1 162.8" fill="none" stroke="#4e96d0" stroke-width="2.7"/>
<path d="M1025.9 163.4 L1034.6 151.4" fill="none" stroke="#4e96d0" stroke-width="2.7"/>
<circle cx="1023.7" cy="174.6" r="4.6" fill="none" stroke="#4e96d0" stroke-width="2.7"/>
<path d="M1027.2 178.3 L1034 184" fill="none" stroke="#4e96d0" stroke-width="2.9"/>
<circle cx="1238.4" cy="166.6" r="16.3" fill="#4e96d0"/>
<path d="M1243.2 160.6 Q1241.6 157.4 1238.4 157.4 Q1233.9 157.4 1233.9 161.4 Q1233.9 164.7 1238.4 165.9 Q1243.1 167.1 1243.1 171.1 Q1243.1 175.6 1238.4 175.6 Q1234.9 175.6 1233.5 172.6 M1238.4 153 V157.4 M1238.4 175.6 V180" fill="none" stroke="#fff" stroke-width="2.9"/>
<rect x="1510.1" y="155.3" width="5.9" height="6.5" fill="#4e96d0"/><rect x="1518.2" y="155.3" width="21.7" height="6.5" fill="#4e96d0"/>
<rect x="1510.1" y="163.7" width="5.9" height="6.5" fill="#4e96d0"/><rect x="1518.2" y="163.7" width="21.7" height="6.5" fill="#4e96d0"/>
<rect x="1510.1" y="172.1" width="5.9" height="6.5" fill="#4e96d0"/><rect x="1518.2" y="172.1" width="21.7" height="6.5" fill="#4e96d0"/>
<path d="M1713.5 176 V172.5 Q1707 168 1707 161.5 A10 10 0 0 1 1727 161.5 Q1727 168 1720.5 172.5 V176 Z" fill="none" stroke="#4e96d0" stroke-width="2.8" stroke-linejoin="round"/>
<rect x="1712.5" y="180.4" width="9.5" height="3" rx="1.5" fill="#4e96d0"/>
</svg></body></html>
